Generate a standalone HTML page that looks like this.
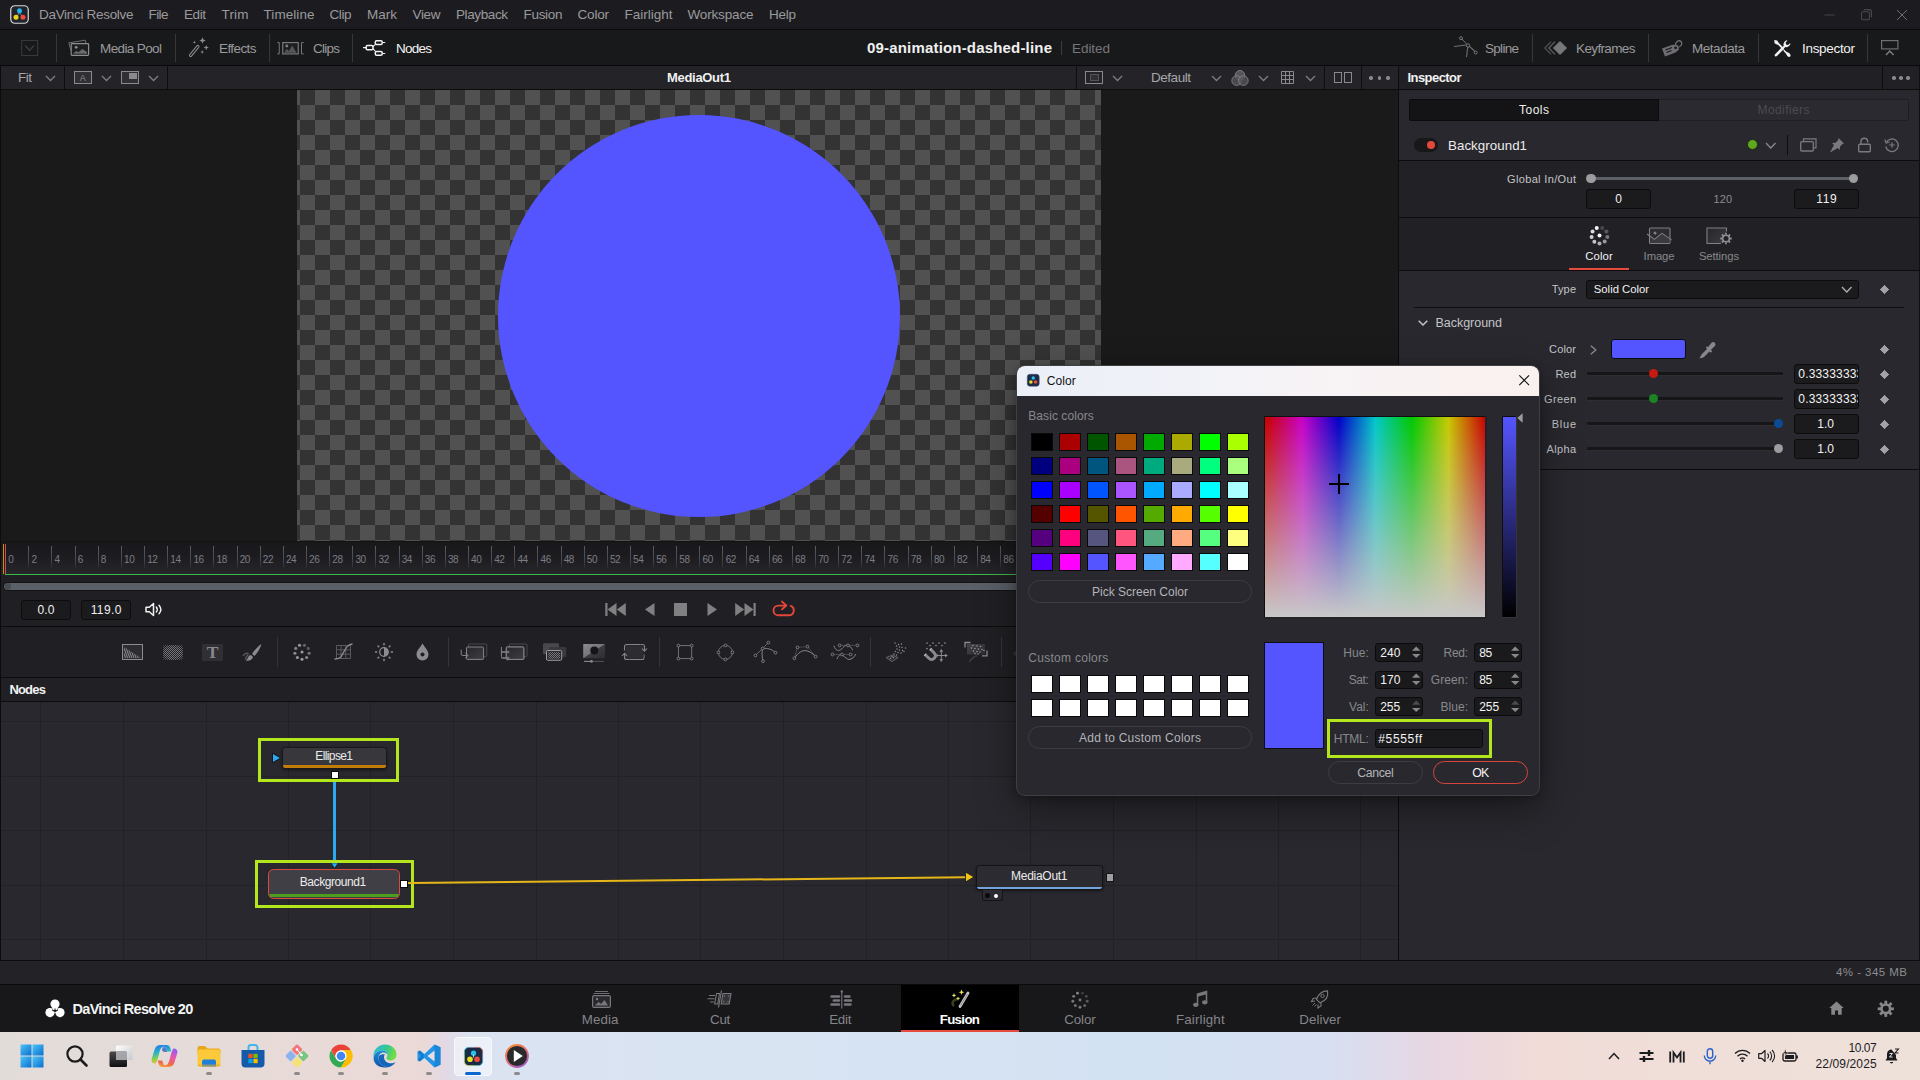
<!DOCTYPE html>
<html lang="en"><head><meta charset="utf-8"><title>DaVinci Resolve - Fusion</title>
<style>
html,body{margin:0;padding:0;background:#000;}
body{width:1920px;height:1080px;overflow:hidden;position:relative;font-family:"Liberation Sans",sans-serif;}
.a{position:absolute;box-sizing:border-box;}
.t{white-space:nowrap;}
svg{overflow:visible;}
</style></head>
<body>
<div class="a" style="left:0px;top:0px;width:1920px;height:30px;background:#1c1c20;"></div>
<div class="a" style="left:0px;top:29px;width:1920px;height:1px;background:#0b0b0c;"></div>
<div class="a" style="left:0px;top:30px;width:1920px;height:36px;background:#18191b;"></div>
<div class="a" style="left:0px;top:65px;width:1920px;height:1px;background:#09090a;"></div>
<div class="a" style="left:0px;top:66px;width:1398px;height:24px;background:#232328;"></div>
<div class="a" style="left:0px;top:89px;width:1398px;height:1px;background:#0c0c0d;"></div>
<div class="a" style="left:0px;top:90px;width:1398px;height:452px;background:#1a1a1a;"></div>
<div class="a" style="left:297px;top:90px;width:804px;height:452px;background-image:conic-gradient(#333333 25%,#515151 0 50%,#333333 0 75%,#515151 0);background-size:30px 30px;background-position:-12px 0;overflow:hidden;"><div class="a" style="left:201px;top:25px;width:402px;height:402px;border-radius:50%;background:#5555ff;"></div></div>
<div class="a" style="left:0px;top:66px;width:1px;height:900px;background:#0c0c0d;"></div>
<svg class="a" style="left:10px;top:5px;" width="19" height="19" viewBox="0 0 19 19"><rect x="0.75" y="0.75" width="17.5" height="17.5" rx="4" fill="#20242c" stroke="#d8d8dc" stroke-width="1.2"/>
<path d="M9.500 7.500L6.300 12M9.500 7.500L12.700 12" stroke="#8a93a8" stroke-width="0.900"/><circle cx="9.500" cy="5.800" r="2.500" fill="#23b5f0"/><circle cx="6" cy="12.300" r="2.500" fill="#e9d51d"/><circle cx="13" cy="12.300" r="2.500" fill="#ef4a3c"/></svg>
<div class="a t" style="top:7.00px;font-size:13.5px;line-height:15px;color:#9a9a9c;letter-spacing:-0.308px;left:39px;"><span>DaVinci Resolve</span></div>
<div class="a t" style="top:7.00px;font-size:13.5px;line-height:15px;color:#9a9a9c;letter-spacing:-0.587px;left:148.5px;"><span>File</span></div>
<div class="a t" style="top:7.00px;font-size:13.5px;line-height:15px;color:#9a9a9c;letter-spacing:-0.422px;left:184px;"><span>Edit</span></div>
<div class="a t" style="top:7.00px;font-size:13.5px;line-height:15px;color:#9a9a9c;letter-spacing:0.171px;left:221.5px;"><span>Trim</span></div>
<div class="a t" style="top:7.00px;font-size:13.5px;line-height:15px;color:#9a9a9c;letter-spacing:0.069px;left:263.5px;"><span>Timeline</span></div>
<div class="a t" style="top:7.00px;font-size:13.5px;line-height:15px;color:#9a9a9c;letter-spacing:-0.422px;left:329.5px;"><span>Clip</span></div>
<div class="a t" style="top:7.00px;font-size:13.5px;line-height:15px;color:#9a9a9c;left:367px;"><span>Mark</span></div>
<div class="a t" style="top:7.00px;font-size:13.5px;line-height:15px;color:#9a9a9c;letter-spacing:-0.344px;left:412.5px;"><span>View</span></div>
<div class="a t" style="top:7.00px;font-size:13.5px;line-height:15px;color:#9a9a9c;letter-spacing:-0.397px;left:456px;"><span>Playback</span></div>
<div class="a t" style="top:7.00px;font-size:13.5px;line-height:15px;color:#9a9a9c;letter-spacing:-0.306px;left:523.5px;"><span>Fusion</span></div>
<div class="a t" style="top:7.00px;font-size:13.5px;line-height:15px;color:#9a9a9c;letter-spacing:-0.191px;left:577.5px;"><span>Color</span></div>
<div class="a t" style="top:7.00px;font-size:13.5px;line-height:15px;color:#9a9a9c;left:624.5px;"><span>Fairlight</span></div>
<div class="a t" style="top:7.00px;font-size:13.5px;line-height:15px;color:#9a9a9c;letter-spacing:-0.160px;left:687.5px;"><span>Workspace</span></div>
<div class="a t" style="top:7.00px;font-size:13.5px;line-height:15px;color:#9a9a9c;letter-spacing:-0.257px;left:769px;"><span>Help</span></div>
<svg class="a" style="left:1824px;top:9px;" width="12" height="12" viewBox="0 0 12 12"><path d="M0.400 6H10.700" stroke="#424246" stroke-width="1.100" fill="none"/></svg>
<svg class="a" style="left:1860px;top:8px;" width="13" height="13" viewBox="0 0 13 13"><rect x="1.500" y="3.700" width="8" height="8" rx="1.700" fill="none" stroke="#48484c" stroke-width="1.100"/><path d="M3.800 1.600h5.200a2.500 2.500 0 0 1 2.500 2.500v5.200" fill="none" stroke="#48484c" stroke-width="1.100"/></svg>
<svg class="a" style="left:1896px;top:9px;" width="12" height="12" viewBox="0 0 12 12"><path d="M1 1L11 11M11 1L1 11" stroke="#707074" stroke-width="1" fill="none"/></svg>
<div class="a" style="left:56px;top:34px;width:1px;height:28px;background:#36363c;"></div>
<div class="a" style="left:175px;top:34px;width:1px;height:28px;background:#36363c;"></div>
<div class="a" style="left:269px;top:34px;width:1px;height:28px;background:#36363c;"></div>
<div class="a" style="left:352px;top:34px;width:1px;height:28px;background:#36363c;"></div>
<div class="a" style="left:1532px;top:34px;width:1px;height:28px;background:#36363c;"></div>
<div class="a" style="left:1648px;top:34px;width:1px;height:28px;background:#36363c;"></div>
<div class="a" style="left:1758px;top:34px;width:1px;height:28px;background:#36363c;"></div>
<div class="a" style="left:1867px;top:34px;width:1px;height:28px;background:#36363c;"></div>
<svg class="a" style="left:21px;top:40px;" width="17" height="16" viewBox="0 0 17 16"><rect x="0.600" y="0.500" width="16" height="15" fill="none" stroke="#38383c" stroke-width="1.100"/><path d="M4.250 5.500l4.250 5 4.500-5" stroke="#3e3e42" stroke-width="1.300" fill="none"/></svg>
<svg class="a" style="left:68px;top:39px;" width="22" height="18" viewBox="0 0 22 18"><path d="M3 11.500L0.800 3.800 17.300 1.200 17.800 4" stroke="#6e6e72" stroke-width="1" fill="none"/><rect x="3.200" y="4.600" width="17.400" height="11.800" rx="0.800" fill="#1d1e20" stroke="#8d8d90" stroke-width="1.200"/>
<circle cx="8.200" cy="8.300" r="1.400" fill="#8d8d90"/><path d="M5 14.800l3.300-2.800 2.200 1.300 3.700-3.300 4.800 3v1.800z" fill="#6a6a6e"/></svg>
<div class="a t" style="top:41.00px;font-size:13.5px;line-height:15px;color:#9a9a9c;letter-spacing:-0.616px;left:100px;"><span>Media Pool</span></div>
<svg class="a" style="left:187px;top:37px;" width="22" height="22" viewBox="0 0 22 22"><path d="M3.600 18.400L10.800 9.600" stroke="#8d8d90" stroke-width="3.300" stroke-linecap="round" fill="none"/><path d="M3.600 18.400L10.800 9.600" stroke="#18191b" stroke-width="1.300" stroke-linecap="round" fill="none"/><path d="M15.5 0.2999999999999998L16.396 2.604L18.7 3.5L16.396 4.396L15.5 6.7L14.604 4.396L12.3 3.5L14.604 2.604z" fill="#8d8d90"/><path d="M19.2 7.8999999999999995L19.956 9.844L21.9 10.6L19.956 11.356L19.2 13.3L18.444 11.356L16.5 10.6L18.444 9.844z" fill="#8d8d90"/><path d="M7.4 3.6L7.848000000000001 4.752L9.0 5.2L7.848000000000001 5.648000000000001L7.4 6.800000000000001L6.952 5.648000000000001L5.800000000000001 5.2L6.952 4.752z" fill="#8d8d90"/><path d="M15.2 13.1L15.732 14.468L17.099999999999998 15L15.732 15.532L15.2 16.9L14.668 15.532L13.299999999999999 15L14.668 14.468z" fill="#8d8d90"/></svg>
<div class="a t" style="top:41.00px;font-size:13.5px;line-height:15px;color:#9a9a9c;letter-spacing:-0.589px;left:219px;"><span>Effects</span></div>
<svg class="a" style="left:277px;top:42px;" width="28" height="13" viewBox="0 0 28 13"><path d="M0.250 0.600h2v11.300h-2" stroke="#77777b" stroke-width="1" fill="none"/><path d="M26.750 0.600h-2.250v11.300h2.250" stroke="#77777b" stroke-width="1" fill="none"/>
<rect x="5.750" y="0.600" width="15.500" height="11.300" fill="#1d1e20" stroke="#808084" stroke-width="1.100"/><circle cx="9.800" cy="4" r="1.400" fill="#808084"/><path d="M7 10.700l2.800-3.700 2.200 2 3.200-5.500 4.300 7.200z" fill="#55555a"/></svg>
<div class="a t" style="top:41.00px;font-size:13.5px;line-height:15px;color:#9a9a9c;letter-spacing:-0.754px;left:313px;"><span>Clips</span></div>
<svg class="a" style="left:363px;top:40px;" width="23" height="16" viewBox="0 0 23 16"><path d="M0 7.600h3M10 6.500l2.500-2.200M10 8.700l2.500 2.800M19.500 2.500h2.700M19.500 13.500h2.700" stroke="#f0f0f0" stroke-width="1.100" fill="none"/>
<rect x="3.200" y="5.400" width="6.800" height="4.400" rx="1.300" fill="none" stroke="#f4f4f4" stroke-width="1.500"/>
<rect x="12.300" y="0.800" width="6.900" height="3.800" rx="1.300" fill="none" stroke="#f4f4f4" stroke-width="1.500"/>
<rect x="12.300" y="11.500" width="6.900" height="3.800" rx="1.300" fill="none" stroke="#f4f4f4" stroke-width="1.500"/></svg>
<div class="a t" style="top:41.00px;font-size:13.5px;line-height:15px;color:#f2f2f2;letter-spacing:-0.756px;left:396px;"><span>Nodes</span></div>
<div class="a t" style="top:39.00px;font-size:15px;line-height:17px;color:#f0f0f0;font-weight:700;letter-spacing:0.179px;left:867px;"><span>09-animation-dashed-line</span></div>
<div class="a" style="left:1061px;top:41px;width:1px;height:14px;background:#3a3a40;"></div>
<div class="a t" style="top:41.00px;font-size:13.5px;line-height:15px;color:#76767a;letter-spacing:-0.058px;left:1072px;"><span>Edited</span></div>
<svg class="a" style="left:1453px;top:36px;" width="25" height="22" viewBox="0 0 25 22"><path d="M1 10.500L13.500 9" stroke="#707074" stroke-width="1.100" fill="none"/>
<path d="M8.500 2.500L15 9.500" stroke="#707074" stroke-width="1" fill="none"/>
<path d="M15 9.500C17 11 20 13 22 16" stroke="#707074" stroke-width="1.100" fill="none"/><path d="M15 9.500C14.500 13 14 17 13.500 21" stroke="#707074" stroke-width="1.100" fill="none"/>
<circle cx="8" cy="2.200" r="1.500" fill="#18191b" stroke="#808084" stroke-width="0.900"/><circle cx="15" cy="9.500" r="1.700" fill="#18191b" stroke="#808084" stroke-width="0.900"/><circle cx="22.700" cy="16.500" r="1.500" fill="#18191b" stroke="#808084" stroke-width="0.900"/></svg>
<div class="a t" style="top:41.00px;font-size:13.5px;line-height:15px;color:#9a9a9c;letter-spacing:-0.706px;left:1485px;"><span>Spline</span></div>
<svg class="a" style="left:1544px;top:41px;" width="24" height="14" viewBox="0 0 24 14"><path d="M7 0.700L0.800 7l6.200 6.300" stroke="#55555a" stroke-width="1.100" fill="none"/><path d="M11 0.700L4.800 7l6.200 6.300" stroke="#66666a" stroke-width="1.100" fill="none"/>
<path d="M16 0.500L22.500 7 16 13.500 9.500 7z" fill="#77777b" stroke="#8a8a8e" stroke-width="0.800"/></svg>
<div class="a t" style="top:41.00px;font-size:13.5px;line-height:15px;color:#9a9a9c;letter-spacing:-0.629px;left:1576px;"><span>Keyframes</span></div>
<svg class="a" style="left:1661px;top:39px;" width="22" height="18" viewBox="0 0 22 18"><path d="M1 9.500l10.500-3.800 5 0.300 1.500 4.500-3.500 3-10.500 4z" fill="#6e6e72"/><circle cx="14.600" cy="8.800" r="1.400" fill="#18191b"/>
<path d="M4.500 11l6.500-2.400M5.500 13.500l5-1.900" stroke="#18191b" stroke-width="1.100"/><path d="M14.500 6c0-3.500 3.500-5.500 5.500-3.500s0 5.500-3.500 6" stroke="#77777b" stroke-width="1.200" fill="none"/></svg>
<div class="a t" style="top:41.00px;font-size:13.5px;line-height:15px;color:#9a9a9c;letter-spacing:-0.471px;left:1692px;"><span>Metadata</span></div>
<svg class="a" style="left:1773px;top:39px;" width="19" height="19" viewBox="0 0 19 19"><path d="M3.500 3L10 9.500" stroke="#f0f0f0" stroke-width="1.800" stroke-linecap="round"/><path d="M1.200 1l3 0.600 1.600 2.600-1.600 1.600-2.600-1.600z" fill="#f0f0f0"/>
<path d="M10.500 10c1.500 1.500 3 3 4.500 3.500s3 2 2.500 3.500-3 1-3.500-0.500-2-3-3.500-4.500z" fill="#f0f0f0"/>
<path d="M3 16.200L9.500 9.500" stroke="#f0f0f0" stroke-width="2.600" stroke-linecap="round"/><path d="M9.500 9.500L12 7" stroke="#f0f0f0" stroke-width="1.800"/>
<path d="M10.800 7.200c-1-2.500 0.200-5 2.800-6l0.800 0.200-1.800 2.300 0.500 1.800 1.800 0.500 2.300-1.800 0.200 0.800c-1 2.600-3.500 3.800-6 2.800z" fill="#f0f0f0"/></svg>
<div class="a t" style="top:41.00px;font-size:13.5px;line-height:15px;color:#f2f2f2;letter-spacing:-0.316px;left:1802px;"><span>Inspector</span></div>
<svg class="a" style="left:1881px;top:40px;" width="18" height="16" viewBox="0 0 18 16"><rect x="0.600" y="0.600" width="16.300" height="8.300" fill="none" stroke="#707074" stroke-width="1.200"/><path d="M5 15l3.800-4 3.800 4" stroke="#808084" stroke-width="1.400" fill="none"/></svg>
<div class="a" style="left:64px;top:66px;width:1px;height:23px;background:#0e0e10;"></div>
<div class="a" style="left:167px;top:66px;width:1px;height:23px;background:#0e0e10;"></div>
<div class="a" style="left:1076px;top:66px;width:1px;height:23px;background:#0e0e10;"></div>
<div class="a" style="left:1324px;top:66px;width:1px;height:23px;background:#0e0e10;"></div>
<div class="a" style="left:1361px;top:66px;width:1px;height:23px;background:#0e0e10;"></div>
<div class="a t" style="top:70.00px;font-size:13.5px;line-height:15px;color:#a6a6a8;letter-spacing:-0.500px;left:18px;"><span>Fit</span></div>
<svg class="a" style="left:45.5px;top:75.75px;" width="9" height="4.5" viewBox="0 0 9 4.5"><path d="M0 0L4.5 4.5L9 0" stroke="#7e7e82" stroke-width="1.3" fill="none"/></svg>
<svg class="a" style="left:74px;top:71px;" width="18" height="13" viewBox="0 0 18 13"><rect x="0.5" y="0.5" width="17" height="12" fill="#2f2f34" stroke="#8a8a8e"/></svg>
<div class="a t" style="top:73.00px;font-size:9px;line-height:10px;color:#8a8a8e;left:-417.30px;width:1000px;text-align:center;"><span>A</span></div>
<svg class="a" style="left:101.5px;top:75.75px;" width="9" height="4.5" viewBox="0 0 9 4.5"><path d="M0 0L4.5 4.5L9 0" stroke="#7e7e82" stroke-width="1.3" fill="none"/></svg>
<svg class="a" style="left:121px;top:71px;" width="18" height="13" viewBox="0 0 18 13"><rect x="0.5" y="0.5" width="17" height="12" fill="#2f2f34" stroke="#8a8a8e"/><rect x="8" y="2" width="8" height="6" fill="#8a8a8e"/></svg>
<svg class="a" style="left:148.5px;top:75.75px;" width="9" height="4.5" viewBox="0 0 9 4.5"><path d="M0 0L4.5 4.5L9 0" stroke="#7e7e82" stroke-width="1.3" fill="none"/></svg>
<div class="a t" style="top:70.00px;font-size:13px;line-height:15px;color:#f0f0f0;font-weight:700;letter-spacing:-0.309px;left:667px;"><span>MediaOut1</span></div>
<svg class="a" style="left:1085px;top:71px;" width="18" height="13" viewBox="0 0 18 13"><rect x="0.5" y="0.5" width="17" height="12" fill="none" stroke="#8a8a8e"/><rect x="5.5" y="3.500" width="8" height="6" fill="#303035" stroke="#8a8a8e" stroke-width="0.900" stroke-dasharray="1 1"/></svg>
<svg class="a" style="left:1112.5px;top:75.75px;" width="9" height="4.5" viewBox="0 0 9 4.5"><path d="M0 0L4.5 4.5L9 0" stroke="#7e7e82" stroke-width="1.3" fill="none"/></svg>
<div class="a t" style="top:70.00px;font-size:13.5px;line-height:15px;color:#a6a6a8;letter-spacing:-0.464px;left:1151px;"><span>Default</span></div>
<svg class="a" style="left:1211.5px;top:75.75px;" width="9" height="4.5" viewBox="0 0 9 4.5"><path d="M0 0L4.5 4.5L9 0" stroke="#7e7e82" stroke-width="1.3" fill="none"/></svg>
<svg class="a" style="left:1231px;top:69px;" width="18" height="18" viewBox="0 0 18 18"><circle cx="9" cy="6.3" r="4.8" fill="#55555a" stroke="#8a8a8e" stroke-width="0.8"/><circle cx="5.6" cy="11.6" r="4.8" fill="#55555a" fill-opacity="0.75" stroke="#8a8a8e" stroke-width="0.8"/><circle cx="12.4" cy="11.6" r="4.8" fill="#55555a" fill-opacity="0.75" stroke="#8a8a8e" stroke-width="0.8"/></svg>
<svg class="a" style="left:1258.5px;top:75.75px;" width="9" height="4.5" viewBox="0 0 9 4.5"><path d="M0 0L4.5 4.5L9 0" stroke="#7e7e82" stroke-width="1.3" fill="none"/></svg>
<svg class="a" style="left:1281px;top:71px;" width="14" height="13" viewBox="0 0 14 13"><path d="M0.5 0.5h12v12h-12zM4.5 0.5v12M8.5 0.5v12M0.5 4.5h12M0.5 8.5h12" stroke="#8a8a8e" stroke-width="1" fill="none"/></svg>
<svg class="a" style="left:1305.5px;top:75.75px;" width="9" height="4.5" viewBox="0 0 9 4.5"><path d="M0 0L4.5 4.5L9 0" stroke="#7e7e82" stroke-width="1.3" fill="none"/></svg>
<svg class="a" style="left:1334px;top:72px;" width="18" height="11" viewBox="0 0 18 11"><rect x="0.5" y="0.5" width="7" height="10" fill="none" stroke="#8a8a8e"/><rect x="10.5" y="0.5" width="7" height="10" fill="none" stroke="#8a8a8e"/></svg>
<div class="a" style="left:1369.3px;top:76.2px;width:3.4px;height:3.4px;background:#8a8a8e;border-radius:50%;"></div>
<div class="a" style="left:1377.8px;top:76.2px;width:3.4px;height:3.4px;background:#8a8a8e;border-radius:50%;"></div>
<div class="a" style="left:1386.3px;top:76.2px;width:3.4px;height:3.4px;background:#8a8a8e;border-radius:50%;"></div>
<div class="a" style="left:1px;top:542px;width:1397px;height:33px;background:linear-gradient(#18181b,#1c1c20 40%,#26262b);"></div>
<div class="a" style="left:0px;top:541px;width:1398px;height:1px;background:#121214;"></div>
<div class="a t" style="top:554.00px;font-size:10px;line-height:11px;color:#7c7c82;letter-spacing:0.130px;left:8.3px;"><span>0</span></div>
<div class="a" style="left:28.0px;top:546px;width:1.3px;height:24px;background:linear-gradient(rgba(110,110,116,0.75),rgba(110,110,116,0.55) 55%,rgba(110,110,116,0));"></div>
<div class="a t" style="top:554.00px;font-size:10px;line-height:11px;color:#7c7c82;letter-spacing:0.130px;left:31.439999999999998px;"><span>2</span></div>
<div class="a" style="left:51.0px;top:546px;width:1.3px;height:24px;background:linear-gradient(rgba(110,110,116,0.75),rgba(110,110,116,0.55) 55%,rgba(110,110,116,0));"></div>
<div class="a t" style="top:554.00px;font-size:10px;line-height:11px;color:#7c7c82;letter-spacing:0.130px;left:54.58px;"><span>4</span></div>
<div class="a" style="left:74.5px;top:546px;width:1.3px;height:24px;background:linear-gradient(rgba(110,110,116,0.75),rgba(110,110,116,0.55) 55%,rgba(110,110,116,0));"></div>
<div class="a t" style="top:554.00px;font-size:10px;line-height:11px;color:#7c7c82;letter-spacing:0.130px;left:77.72000000000001px;"><span>6</span></div>
<div class="a" style="left:97.5px;top:546px;width:1.3px;height:24px;background:linear-gradient(rgba(110,110,116,0.75),rgba(110,110,116,0.55) 55%,rgba(110,110,116,0));"></div>
<div class="a t" style="top:554.00px;font-size:10px;line-height:11px;color:#7c7c82;letter-spacing:0.130px;left:100.86000000000001px;"><span>8</span></div>
<div class="a" style="left:120.5px;top:546px;width:1.3px;height:24px;background:linear-gradient(rgba(110,110,116,0.75),rgba(110,110,116,0.55) 55%,rgba(110,110,116,0));"></div>
<div class="a t" style="top:554.00px;font-size:10px;line-height:11px;color:#7c7c82;letter-spacing:-0.429px;left:124.00000000000001px;"><span>10</span></div>
<div class="a" style="left:143.5px;top:546px;width:1.3px;height:24px;background:linear-gradient(rgba(110,110,116,0.75),rgba(110,110,116,0.55) 55%,rgba(110,110,116,0));"></div>
<div class="a t" style="top:554.00px;font-size:10px;line-height:11px;color:#7c7c82;letter-spacing:-0.429px;left:147.14000000000001px;"><span>12</span></div>
<div class="a" style="left:167.0px;top:546px;width:1.3px;height:24px;background:linear-gradient(rgba(110,110,116,0.75),rgba(110,110,116,0.55) 55%,rgba(110,110,116,0));"></div>
<div class="a t" style="top:554.00px;font-size:10px;line-height:11px;color:#7c7c82;letter-spacing:-0.429px;left:170.28000000000003px;"><span>14</span></div>
<div class="a" style="left:190.0px;top:546px;width:1.3px;height:24px;background:linear-gradient(rgba(110,110,116,0.75),rgba(110,110,116,0.55) 55%,rgba(110,110,116,0));"></div>
<div class="a t" style="top:554.00px;font-size:10px;line-height:11px;color:#7c7c82;letter-spacing:-0.429px;left:193.42000000000002px;"><span>16</span></div>
<div class="a" style="left:213.0px;top:546px;width:1.3px;height:24px;background:linear-gradient(rgba(110,110,116,0.75),rgba(110,110,116,0.55) 55%,rgba(110,110,116,0));"></div>
<div class="a t" style="top:554.00px;font-size:10px;line-height:11px;color:#7c7c82;letter-spacing:-0.429px;left:216.56px;"><span>18</span></div>
<div class="a" style="left:236.5px;top:546px;width:1.3px;height:24px;background:linear-gradient(rgba(110,110,116,0.75),rgba(110,110,116,0.55) 55%,rgba(110,110,116,0));"></div>
<div class="a t" style="top:554.00px;font-size:10px;line-height:11px;color:#7c7c82;letter-spacing:-0.429px;left:239.70000000000002px;"><span>20</span></div>
<div class="a" style="left:259.5px;top:546px;width:1.3px;height:24px;background:linear-gradient(rgba(110,110,116,0.75),rgba(110,110,116,0.55) 55%,rgba(110,110,116,0));"></div>
<div class="a t" style="top:554.00px;font-size:10px;line-height:11px;color:#7c7c82;letter-spacing:-0.429px;left:262.84px;"><span>22</span></div>
<div class="a" style="left:282.5px;top:546px;width:1.3px;height:24px;background:linear-gradient(rgba(110,110,116,0.75),rgba(110,110,116,0.55) 55%,rgba(110,110,116,0));"></div>
<div class="a t" style="top:554.00px;font-size:10px;line-height:11px;color:#7c7c82;letter-spacing:-0.429px;left:285.97999999999996px;"><span>24</span></div>
<div class="a" style="left:305.5px;top:546px;width:1.3px;height:24px;background:linear-gradient(rgba(110,110,116,0.75),rgba(110,110,116,0.55) 55%,rgba(110,110,116,0));"></div>
<div class="a t" style="top:554.00px;font-size:10px;line-height:11px;color:#7c7c82;letter-spacing:-0.429px;left:309.11999999999995px;"><span>26</span></div>
<div class="a" style="left:329.0px;top:546px;width:1.3px;height:24px;background:linear-gradient(rgba(110,110,116,0.75),rgba(110,110,116,0.55) 55%,rgba(110,110,116,0));"></div>
<div class="a t" style="top:554.00px;font-size:10px;line-height:11px;color:#7c7c82;letter-spacing:-0.429px;left:332.26px;"><span>28</span></div>
<div class="a" style="left:352.0px;top:546px;width:1.3px;height:24px;background:linear-gradient(rgba(110,110,116,0.75),rgba(110,110,116,0.55) 55%,rgba(110,110,116,0));"></div>
<div class="a t" style="top:554.00px;font-size:10px;line-height:11px;color:#7c7c82;letter-spacing:-0.429px;left:355.4px;"><span>30</span></div>
<div class="a" style="left:375.0px;top:546px;width:1.3px;height:24px;background:linear-gradient(rgba(110,110,116,0.75),rgba(110,110,116,0.55) 55%,rgba(110,110,116,0));"></div>
<div class="a t" style="top:554.00px;font-size:10px;line-height:11px;color:#7c7c82;letter-spacing:-0.429px;left:378.53999999999996px;"><span>32</span></div>
<div class="a" style="left:398.5px;top:546px;width:1.3px;height:24px;background:linear-gradient(rgba(110,110,116,0.75),rgba(110,110,116,0.55) 55%,rgba(110,110,116,0));"></div>
<div class="a t" style="top:554.00px;font-size:10px;line-height:11px;color:#7c7c82;letter-spacing:-0.429px;left:401.67999999999995px;"><span>34</span></div>
<div class="a" style="left:421.5px;top:546px;width:1.3px;height:24px;background:linear-gradient(rgba(110,110,116,0.75),rgba(110,110,116,0.55) 55%,rgba(110,110,116,0));"></div>
<div class="a t" style="top:554.00px;font-size:10px;line-height:11px;color:#7c7c82;letter-spacing:-0.429px;left:424.81999999999994px;"><span>36</span></div>
<div class="a" style="left:444.5px;top:546px;width:1.3px;height:24px;background:linear-gradient(rgba(110,110,116,0.75),rgba(110,110,116,0.55) 55%,rgba(110,110,116,0));"></div>
<div class="a t" style="top:554.00px;font-size:10px;line-height:11px;color:#7c7c82;letter-spacing:-0.429px;left:447.96px;"><span>38</span></div>
<div class="a" style="left:467.5px;top:546px;width:1.3px;height:24px;background:linear-gradient(rgba(110,110,116,0.75),rgba(110,110,116,0.55) 55%,rgba(110,110,116,0));"></div>
<div class="a t" style="top:554.00px;font-size:10px;line-height:11px;color:#7c7c82;letter-spacing:-0.429px;left:471.09999999999997px;"><span>40</span></div>
<div class="a" style="left:491.0px;top:546px;width:1.3px;height:24px;background:linear-gradient(rgba(110,110,116,0.75),rgba(110,110,116,0.55) 55%,rgba(110,110,116,0));"></div>
<div class="a t" style="top:554.00px;font-size:10px;line-height:11px;color:#7c7c82;letter-spacing:-0.429px;left:494.23999999999995px;"><span>42</span></div>
<div class="a" style="left:514.0px;top:546px;width:1.3px;height:24px;background:linear-gradient(rgba(110,110,116,0.75),rgba(110,110,116,0.55) 55%,rgba(110,110,116,0));"></div>
<div class="a t" style="top:554.00px;font-size:10px;line-height:11px;color:#7c7c82;letter-spacing:-0.429px;left:517.38px;"><span>44</span></div>
<div class="a" style="left:537.0px;top:546px;width:1.3px;height:24px;background:linear-gradient(rgba(110,110,116,0.75),rgba(110,110,116,0.55) 55%,rgba(110,110,116,0));"></div>
<div class="a t" style="top:554.00px;font-size:10px;line-height:11px;color:#7c7c82;letter-spacing:-0.429px;left:540.52px;"><span>46</span></div>
<div class="a" style="left:560.5px;top:546px;width:1.3px;height:24px;background:linear-gradient(rgba(110,110,116,0.75),rgba(110,110,116,0.55) 55%,rgba(110,110,116,0));"></div>
<div class="a t" style="top:554.00px;font-size:10px;line-height:11px;color:#7c7c82;letter-spacing:-0.429px;left:563.66px;"><span>48</span></div>
<div class="a" style="left:583.5px;top:546px;width:1.3px;height:24px;background:linear-gradient(rgba(110,110,116,0.75),rgba(110,110,116,0.55) 55%,rgba(110,110,116,0));"></div>
<div class="a t" style="top:554.00px;font-size:10px;line-height:11px;color:#7c7c82;letter-spacing:-0.429px;left:586.8px;"><span>50</span></div>
<div class="a" style="left:606.5px;top:546px;width:1.3px;height:24px;background:linear-gradient(rgba(110,110,116,0.75),rgba(110,110,116,0.55) 55%,rgba(110,110,116,0));"></div>
<div class="a t" style="top:554.00px;font-size:10px;line-height:11px;color:#7c7c82;letter-spacing:-0.429px;left:609.9399999999999px;"><span>52</span></div>
<div class="a" style="left:629.5px;top:546px;width:1.3px;height:24px;background:linear-gradient(rgba(110,110,116,0.75),rgba(110,110,116,0.55) 55%,rgba(110,110,116,0));"></div>
<div class="a t" style="top:554.00px;font-size:10px;line-height:11px;color:#7c7c82;letter-spacing:-0.429px;left:633.0799999999999px;"><span>54</span></div>
<div class="a" style="left:653.0px;top:546px;width:1.3px;height:24px;background:linear-gradient(rgba(110,110,116,0.75),rgba(110,110,116,0.55) 55%,rgba(110,110,116,0));"></div>
<div class="a t" style="top:554.00px;font-size:10px;line-height:11px;color:#7c7c82;letter-spacing:-0.429px;left:656.22px;"><span>56</span></div>
<div class="a" style="left:676.0px;top:546px;width:1.3px;height:24px;background:linear-gradient(rgba(110,110,116,0.75),rgba(110,110,116,0.55) 55%,rgba(110,110,116,0));"></div>
<div class="a t" style="top:554.00px;font-size:10px;line-height:11px;color:#7c7c82;letter-spacing:-0.429px;left:679.36px;"><span>58</span></div>
<div class="a" style="left:699.0px;top:546px;width:1.3px;height:24px;background:linear-gradient(rgba(110,110,116,0.75),rgba(110,110,116,0.55) 55%,rgba(110,110,116,0));"></div>
<div class="a t" style="top:554.00px;font-size:10px;line-height:11px;color:#7c7c82;letter-spacing:-0.429px;left:702.5px;"><span>60</span></div>
<div class="a" style="left:722.0px;top:546px;width:1.3px;height:24px;background:linear-gradient(rgba(110,110,116,0.75),rgba(110,110,116,0.55) 55%,rgba(110,110,116,0));"></div>
<div class="a t" style="top:554.00px;font-size:10px;line-height:11px;color:#7c7c82;letter-spacing:-0.429px;left:725.64px;"><span>62</span></div>
<div class="a" style="left:745.5px;top:546px;width:1.3px;height:24px;background:linear-gradient(rgba(110,110,116,0.75),rgba(110,110,116,0.55) 55%,rgba(110,110,116,0));"></div>
<div class="a t" style="top:554.00px;font-size:10px;line-height:11px;color:#7c7c82;letter-spacing:-0.429px;left:748.78px;"><span>64</span></div>
<div class="a" style="left:768.5px;top:546px;width:1.3px;height:24px;background:linear-gradient(rgba(110,110,116,0.75),rgba(110,110,116,0.55) 55%,rgba(110,110,116,0));"></div>
<div class="a t" style="top:554.00px;font-size:10px;line-height:11px;color:#7c7c82;letter-spacing:-0.429px;left:771.92px;"><span>66</span></div>
<div class="a" style="left:791.5px;top:546px;width:1.3px;height:24px;background:linear-gradient(rgba(110,110,116,0.75),rgba(110,110,116,0.55) 55%,rgba(110,110,116,0));"></div>
<div class="a t" style="top:554.00px;font-size:10px;line-height:11px;color:#7c7c82;letter-spacing:-0.429px;left:795.06px;"><span>68</span></div>
<div class="a" style="left:815.0px;top:546px;width:1.3px;height:24px;background:linear-gradient(rgba(110,110,116,0.75),rgba(110,110,116,0.55) 55%,rgba(110,110,116,0));"></div>
<div class="a t" style="top:554.00px;font-size:10px;line-height:11px;color:#7c7c82;letter-spacing:-0.429px;left:818.1999999999999px;"><span>70</span></div>
<div class="a" style="left:838.0px;top:546px;width:1.3px;height:24px;background:linear-gradient(rgba(110,110,116,0.75),rgba(110,110,116,0.55) 55%,rgba(110,110,116,0));"></div>
<div class="a t" style="top:554.00px;font-size:10px;line-height:11px;color:#7c7c82;letter-spacing:-0.429px;left:841.3399999999999px;"><span>72</span></div>
<div class="a" style="left:861.0px;top:546px;width:1.3px;height:24px;background:linear-gradient(rgba(110,110,116,0.75),rgba(110,110,116,0.55) 55%,rgba(110,110,116,0));"></div>
<div class="a t" style="top:554.00px;font-size:10px;line-height:11px;color:#7c7c82;letter-spacing:-0.429px;left:864.48px;"><span>74</span></div>
<div class="a" style="left:884.0px;top:546px;width:1.3px;height:24px;background:linear-gradient(rgba(110,110,116,0.75),rgba(110,110,116,0.55) 55%,rgba(110,110,116,0));"></div>
<div class="a t" style="top:554.00px;font-size:10px;line-height:11px;color:#7c7c82;letter-spacing:-0.429px;left:887.62px;"><span>76</span></div>
<div class="a" style="left:907.5px;top:546px;width:1.3px;height:24px;background:linear-gradient(rgba(110,110,116,0.75),rgba(110,110,116,0.55) 55%,rgba(110,110,116,0));"></div>
<div class="a t" style="top:554.00px;font-size:10px;line-height:11px;color:#7c7c82;letter-spacing:-0.429px;left:910.76px;"><span>78</span></div>
<div class="a" style="left:930.5px;top:546px;width:1.3px;height:24px;background:linear-gradient(rgba(110,110,116,0.75),rgba(110,110,116,0.55) 55%,rgba(110,110,116,0));"></div>
<div class="a t" style="top:554.00px;font-size:10px;line-height:11px;color:#7c7c82;letter-spacing:-0.429px;left:933.9px;"><span>80</span></div>
<div class="a" style="left:953.5px;top:546px;width:1.3px;height:24px;background:linear-gradient(rgba(110,110,116,0.75),rgba(110,110,116,0.55) 55%,rgba(110,110,116,0));"></div>
<div class="a t" style="top:554.00px;font-size:10px;line-height:11px;color:#7c7c82;letter-spacing:-0.429px;left:957.04px;"><span>82</span></div>
<div class="a" style="left:977.0px;top:546px;width:1.3px;height:24px;background:linear-gradient(rgba(110,110,116,0.75),rgba(110,110,116,0.55) 55%,rgba(110,110,116,0));"></div>
<div class="a t" style="top:554.00px;font-size:10px;line-height:11px;color:#7c7c82;letter-spacing:-0.429px;left:980.18px;"><span>84</span></div>
<div class="a" style="left:1000.0px;top:546px;width:1.3px;height:24px;background:linear-gradient(rgba(110,110,116,0.75),rgba(110,110,116,0.55) 55%,rgba(110,110,116,0));"></div>
<div class="a t" style="top:554.00px;font-size:10px;line-height:11px;color:#7c7c82;letter-spacing:-0.429px;left:1003.3199999999999px;"><span>86</span></div>
<div class="a" style="left:1023.0px;top:546px;width:1.3px;height:24px;background:linear-gradient(rgba(110,110,116,0.75),rgba(110,110,116,0.55) 55%,rgba(110,110,116,0));"></div>
<div class="a t" style="top:554.00px;font-size:10px;line-height:11px;color:#7c7c82;letter-spacing:-0.429px;left:1026.46px;"><span>88</span></div>
<div class="a" style="left:1046.0px;top:546px;width:1.3px;height:24px;background:linear-gradient(rgba(110,110,116,0.75),rgba(110,110,116,0.55) 55%,rgba(110,110,116,0));"></div>
<div class="a t" style="top:554.00px;font-size:10px;line-height:11px;color:#7c7c82;letter-spacing:-0.429px;left:1049.6000000000001px;"><span>90</span></div>
<div class="a" style="left:1069.5px;top:546px;width:1.3px;height:24px;background:linear-gradient(rgba(110,110,116,0.75),rgba(110,110,116,0.55) 55%,rgba(110,110,116,0));"></div>
<div class="a t" style="top:554.00px;font-size:10px;line-height:11px;color:#7c7c82;letter-spacing:-0.429px;left:1072.7400000000002px;"><span>92</span></div>
<div class="a" style="left:1092.5px;top:546px;width:1.3px;height:24px;background:linear-gradient(rgba(110,110,116,0.75),rgba(110,110,116,0.55) 55%,rgba(110,110,116,0));"></div>
<div class="a t" style="top:554.00px;font-size:10px;line-height:11px;color:#7c7c82;letter-spacing:-0.429px;left:1095.88px;"><span>94</span></div>
<div class="a" style="left:1115.5px;top:546px;width:1.3px;height:24px;background:linear-gradient(rgba(110,110,116,0.75),rgba(110,110,116,0.55) 55%,rgba(110,110,116,0));"></div>
<div class="a t" style="top:554.00px;font-size:10px;line-height:11px;color:#7c7c82;letter-spacing:-0.429px;left:1119.0200000000002px;"><span>96</span></div>
<div class="a" style="left:1139.0px;top:546px;width:1.3px;height:24px;background:linear-gradient(rgba(110,110,116,0.75),rgba(110,110,116,0.55) 55%,rgba(110,110,116,0));"></div>
<div class="a t" style="top:554.00px;font-size:10px;line-height:11px;color:#7c7c82;letter-spacing:-0.429px;left:1142.1600000000003px;"><span>98</span></div>
<div class="a" style="left:1162.0px;top:546px;width:1.3px;height:24px;background:linear-gradient(rgba(110,110,116,0.75),rgba(110,110,116,0.55) 55%,rgba(110,110,116,0));"></div>
<div class="a t" style="top:554.00px;font-size:10px;line-height:11px;color:#7c7c82;letter-spacing:-0.344px;left:1165.3000000000002px;"><span>100</span></div>
<div class="a" style="left:1185.0px;top:546px;width:1.3px;height:24px;background:linear-gradient(rgba(110,110,116,0.75),rgba(110,110,116,0.55) 55%,rgba(110,110,116,0));"></div>
<div class="a t" style="top:554.00px;font-size:10px;line-height:11px;color:#7c7c82;letter-spacing:-0.344px;left:1188.4400000000003px;"><span>102</span></div>
<div class="a" style="left:1208.0px;top:546px;width:1.3px;height:24px;background:linear-gradient(rgba(110,110,116,0.75),rgba(110,110,116,0.55) 55%,rgba(110,110,116,0));"></div>
<div class="a t" style="top:554.00px;font-size:10px;line-height:11px;color:#7c7c82;letter-spacing:-0.344px;left:1211.5800000000002px;"><span>104</span></div>
<div class="a" style="left:1231.5px;top:546px;width:1.3px;height:24px;background:linear-gradient(rgba(110,110,116,0.75),rgba(110,110,116,0.55) 55%,rgba(110,110,116,0));"></div>
<div class="a t" style="top:554.00px;font-size:10px;line-height:11px;color:#7c7c82;letter-spacing:-0.344px;left:1234.7200000000003px;"><span>106</span></div>
<div class="a" style="left:1254.5px;top:546px;width:1.3px;height:24px;background:linear-gradient(rgba(110,110,116,0.75),rgba(110,110,116,0.55) 55%,rgba(110,110,116,0));"></div>
<div class="a t" style="top:554.00px;font-size:10px;line-height:11px;color:#7c7c82;letter-spacing:-0.344px;left:1257.8600000000001px;"><span>108</span></div>
<div class="a" style="left:1277.5px;top:546px;width:1.3px;height:24px;background:linear-gradient(rgba(110,110,116,0.75),rgba(110,110,116,0.55) 55%,rgba(110,110,116,0));"></div>
<div class="a t" style="top:554.00px;font-size:10px;line-height:11px;color:#7c7c82;letter-spacing:0.027px;left:1281.0000000000002px;"><span>110</span></div>
<div class="a" style="left:1300.5px;top:546px;width:1.3px;height:24px;background:linear-gradient(rgba(110,110,116,0.75),rgba(110,110,116,0.55) 55%,rgba(110,110,116,0));"></div>
<div class="a t" style="top:554.00px;font-size:10px;line-height:11px;color:#7c7c82;letter-spacing:0.027px;left:1304.1400000000003px;"><span>112</span></div>
<div class="a" style="left:1324.0px;top:546px;width:1.3px;height:24px;background:linear-gradient(rgba(110,110,116,0.75),rgba(110,110,116,0.55) 55%,rgba(110,110,116,0));"></div>
<div class="a t" style="top:554.00px;font-size:10px;line-height:11px;color:#7c7c82;letter-spacing:0.027px;left:1327.2800000000002px;"><span>114</span></div>
<div class="a" style="left:1347.0px;top:546px;width:1.3px;height:24px;background:linear-gradient(rgba(110,110,116,0.75),rgba(110,110,116,0.55) 55%,rgba(110,110,116,0));"></div>
<div class="a t" style="top:554.00px;font-size:10px;line-height:11px;color:#7c7c82;letter-spacing:0.027px;left:1350.4200000000003px;"><span>116</span></div>
<div class="a" style="left:1370.0px;top:546px;width:1.3px;height:24px;background:linear-gradient(rgba(110,110,116,0.75),rgba(110,110,116,0.55) 55%,rgba(110,110,116,0));"></div>
<div class="a t" style="top:554.00px;font-size:10px;line-height:11px;color:#7c7c82;letter-spacing:0.027px;left:1373.5600000000002px;"><span>118</span></div>
<div class="a" style="left:1393.5px;top:546px;width:1.3px;height:24px;background:linear-gradient(rgba(110,110,116,0.75),rgba(110,110,116,0.55) 55%,rgba(110,110,116,0));"></div>
<div class="a" style="left:3px;top:544px;width:1.4px;height:30px;background:#b8962a;"></div>
<div class="a" style="left:4.6px;top:544px;width:1.6px;height:30px;background:#e2452f;"></div>
<div class="a" style="left:5px;top:574px;width:1393px;height:1.3px;background:#3dbb4a;"></div>
<div class="a" style="left:1px;top:575.3px;width:1397px;height:52px;background:#202024;"></div>
<div class="a" style="left:3px;top:582px;width:1393px;height:9px;background:#131315;border-radius:4.5px;"></div>
<div class="a" style="left:4px;top:583px;width:1391px;height:7px;background:#5a5f68;border-radius:3.5px;"></div>
<div class="a" style="left:4.5px;top:583.3px;width:6.4px;height:6.4px;background:#474b53;border-radius:50%;"></div>
<div class="a" style="left:0px;top:626px;width:1398px;height:1px;background:#0c0c0d;"></div>
<div class="a" style="left:21px;top:600px;width:50px;height:20px;background:#1b1b1d;border:1px solid #0c0c0d;border-radius:3px;"></div>
<div class="a t" style="top:603.00px;font-size:12px;line-height:14px;color:#f0f0f0;letter-spacing:0.156px;left:-453.92px;width:1000px;text-align:center;"><span>0.0</span></div>
<div class="a" style="left:81px;top:600px;width:50px;height:20px;background:#1b1b1d;border:1px solid #0c0c0d;border-radius:3px;"></div>
<div class="a t" style="top:603.00px;font-size:12px;line-height:14px;color:#f0f0f0;letter-spacing:0.365px;left:-393.82px;width:1000px;text-align:center;"><span>119.0</span></div>
<svg class="a" style="left:145px;top:602px;" width="18" height="15" viewBox="0 0 18 15"><path d="M1 5.2h3.3l4.2-3.7v12l-4.2-3.7h-3.3z" fill="none" stroke="#f0f0f0" stroke-width="1.5" stroke-linejoin="round"/>
<path d="M11.3 5c1.2 1.5 1.2 3.500 0 5" stroke="#f0f0f0" stroke-width="1.4" fill="none" stroke-linecap="round"/><path d="M14 3.200c2.200 2.600 2.200 6 0 8.600" stroke="#f0f0f0" stroke-width="1.4" fill="none" stroke-linecap="round"/></svg>
<svg class="a" style="left:605px;top:602px;" width="22" height="15" viewBox="0 0 22 15"><rect x="0.3" y="1" width="2.2" height="13" fill="#808083"/><path d="M11.5 1v13l-9-6.500z M20.800 1v13l-9-6.500z" fill="#808083"/></svg>
<svg class="a" style="left:644px;top:602px;" width="11" height="15" viewBox="0 0 11 15"><path d="M10.500 1v13l-9.500-6.500z" fill="#808083"/></svg>
<svg class="a" style="left:674px;top:603px;" width="13" height="13" viewBox="0 0 13 13"><rect x="0" y="0" width="13" height="13" fill="#808083"/></svg>
<svg class="a" style="left:707px;top:602px;" width="11" height="15" viewBox="0 0 11 15"><path d="M0.500 1v13l9.500-6.500z" fill="#808083"/></svg>
<svg class="a" style="left:734px;top:602px;" width="22" height="15" viewBox="0 0 22 15"><rect x="19.500" y="1" width="2.2" height="13" fill="#808083"/><path d="M1.200 1v13l9-6.500z M10.500 1v13l9-6.500z" fill="#808083"/></svg>
<svg class="a" style="left:772px;top:600px;" width="23" height="17" viewBox="0 0 23 17"><path d="M13.500 5.600H6.350a4.850 4.850 0 0 0 0 9.700H16.900a4.850 4.850 0 0 0 1.800-9.350" fill="none" stroke="#e8453a" stroke-width="1.900" stroke-linecap="round"/>
<path d="M10 1.600l4.300 3.900-4.300 3.900" fill="none" stroke="#e8453a" stroke-width="1.900" stroke-linecap="round" stroke-linejoin="round"/></svg>
<div class="a" style="left:1px;top:627px;width:1397px;height:50px;background:#202024;"></div>
<div class="a" style="left:0px;top:677px;width:1398px;height:1px;background:#0c0c0d;"></div>
<div class="a" style="left:277.0px;top:637px;width:1px;height:30px;background:#34343a;"></div>
<div class="a" style="left:448.0px;top:637px;width:1px;height:30px;background:#34343a;"></div>
<div class="a" style="left:659.0px;top:637px;width:1px;height:30px;background:#34343a;"></div>
<div class="a" style="left:870.0px;top:637px;width:1px;height:30px;background:#34343a;"></div>
<div class="a" style="left:1001.0px;top:637px;width:1px;height:30px;background:#34343a;"></div>
<svg class="a" style="left:122px;top:644px;" width="21" height="16" viewBox="0 0 21 16"><defs><pattern id="hat" width="2" height="2" patternUnits="userSpaceOnUse" patternTransform="rotate(-20)"><rect width="1" height="2" fill="#8c8c90"/></pattern></defs>
<rect x="0.5" y="0.5" width="20" height="15" fill="#2c2c31" stroke="#8c8c90"/><path d="M2 3L19 14H2z" fill="url(#hat)"/></svg>
<svg class="a" style="left:163px;top:645px;" width="20" height="15" viewBox="0 0 20 15"><defs><pattern id="dots" width="2" height="2" patternUnits="userSpaceOnUse"><rect width="1" height="1" fill="#77777b"/><rect x="1" y="1" width="1" height="1" fill="#77777b"/></pattern>
<radialGradient id="fade" cx="50%" cy="50%" r="75%"><stop offset="0.55" stop-color="#fff"/><stop offset="1" stop-color="#000"/></radialGradient><mask id="mk"><rect width="20" height="15" fill="url(#fade)"/></mask></defs>
<rect width="20" height="15" fill="url(#dots)" mask="url(#mk)"/></svg>
<div class="a" style="left:202px;top:644px;width:21px;height:17px;background:#2f2f34;border-radius:1px;"></div>
<div class="a t" style="top:642.00px;font-size:17.5px;line-height:20px;color:#88888c;font-weight:700;font-family:'Liberation Serif',serif;left:-287.50px;width:1000px;text-align:center;"><span>T</span></div>
<svg class="a" style="left:242px;top:643px;" width="21" height="19" viewBox="0 0 21 19"><path d="M19.500 1c-3 2-7 6-9.500 10l2.500 2c3-3.500 6-8 7-12z" fill="#8c8c90"/><path d="M9 12c-2.500 0.500-3 2-3.500 3.500-0.300 1-1 1.800-2 2 2.500 0.800 6.500 0 7.500-3.500z" fill="#8c8c90"/>
<path d="M1 13c2-3 6-4 5-1.500s-4 4-1.500 4.500" stroke="#5a5a5e" stroke-width="1.300" fill="none"/></svg>
<svg class="a" style="left:292px;top:642px;" width="20" height="20" viewBox="0 0 20 20"><circle cx="7.53" cy="3.24" r="1.55" fill="#99999d"/><circle cx="12.46" cy="3.23" r="1.55" fill="#66666a"/><circle cx="16.23" cy="6.39" r="1.55" fill="#5a5a5e"/><circle cx="17.09" cy="11.24" r="1.55" fill="#77777b"/><circle cx="14.63" cy="15.51" r="1.55" fill="#88888c"/><circle cx="10.01" cy="17.20" r="1.55" fill="#99999d"/><circle cx="5.38" cy="15.52" r="1.55" fill="#99999d"/><circle cx="2.91" cy="11.26" r="1.55" fill="#8c8c90"/><circle cx="3.76" cy="6.41" r="1.55" fill="#808084"/><circle cx="10" cy="10" r="1.55" fill="#99999d"/></svg>
<svg class="a" style="left:334px;top:643px;" width="19" height="18" viewBox="0 0 19 18"><path d="M2.500 2.500h14v13h-14zM7 2.500v13M11.800 2.500v13M2.500 6.800h14M2.500 11.200h14" stroke="#5a5a5e" stroke-width="1" fill="none"/>
<path d="M0.500 16c6 0 6.500-2 9-6.500s4-8 9-8.500" stroke="#8c8c90" stroke-width="1.300" fill="none"/></svg>
<svg class="a" style="left:373px;top:642px;" width="22" height="20" viewBox="0 0 22 20"><circle cx="11" cy="10" r="4.300" fill="none" stroke="#8c8c90" stroke-width="1.200"/><path d="M11 5.700a4.300 4.300 0 0 1 0 8.600z" fill="#8c8c90"/>
<g stroke="#8c8c90" stroke-width="1.500" stroke-linecap="round"><path d="M11 1.500v1.200M11 17.300v1.200M2.500 10h1.200M18.300 10h1.200M5 4l0.800 0.800M16.200 15.200l0.800 0.800M5 16l0.800-0.800M16.200 4.800l0.800-0.800"/></g></svg>
<svg class="a" style="left:416px;top:643px;" width="13" height="18" viewBox="0 0 13 18"><path d="M6.500 0.500c2 3.500 6 7 6 11a6 6 0 0 1 -12 0c0-4 4-7.500 6-11z" fill="#8c8c90"/><circle cx="6.500" cy="11.500" r="2" fill="#202024"/></svg>
<svg class="a" style="left:460px;top:643px;" width="28" height="18" viewBox="0 0 28 18"><defs><linearGradient id="fg" x1="0" y1="0" x2="1" y2="1"><stop offset="0" stop-color="#26262b"/><stop offset="1" stop-color="#3e3e44"/></linearGradient></defs><rect x="8.600" y="1" width="18.200" height="12.400" rx="0.800" fill="none" stroke="#4e4e53" stroke-width="0.900"/><rect x="6.500" y="4" width="17.100" height="12.400" rx="0.800" fill="url(#fg)" stroke="#858589" stroke-width="1"/><path d="M1.200 6.700v4.300a1.500 1.500 0 0 0 1.500 1.500h5" stroke="#858589" stroke-width="1" fill="none"/><path d="M5.300 9.800l2.700 2.700-2.700 2.700" stroke="#858589" stroke-width="1" fill="none"/></svg>
<svg class="a" style="left:500px;top:643px;" width="28" height="18" viewBox="0 0 28 18"><rect x="9.300" y="1" width="17.700" height="12.400" rx="0.800" fill="none" stroke="#4e4e53" stroke-width="0.900"/><rect x="6.300" y="4" width="17.500" height="12.400" rx="0.800" fill="url(#fg)" stroke="#858589" stroke-width="1"/><path d="M1.400 4v9.500a1.500 1.500 0 0 0 1.500 1.500h6.500M1.400 9h8" stroke="#858589" stroke-width="1" fill="none"/><path d="M7.500 6.800l2.300 2.200-2.300 2.200M7.500 12.800l2.300 2.200-2.300 2.200" stroke="#858589" stroke-width="1" fill="none"/><rect x="6.300" y="4" width="17.500" height="12.400" rx="0.800" fill="url(#fg)" stroke="#858589" stroke-width="1"/><path d="M1.400 9h5.500M1.400 15h5.500" stroke="#858589" stroke-width="1"/><path d="M7.300 7.400l2.600 1.600-2.600 1.600zM7.300 13.400l2.600 1.600-2.600 1.600z" fill="#858589"/></svg>
<svg class="a" style="left:542px;top:642px;" width="25" height="20" viewBox="0 0 25 20"><rect x="1" y="1.200" width="16" height="11" rx="1.200" fill="#48484d"/><rect x="7.200" y="5" width="17" height="10" rx="1.200" fill="#38383d"/><rect x="4.500" y="8.500" width="15.200" height="9.800" rx="1.200" fill="#2a2a2f" stroke="#9c9ca0" stroke-width="1"/><rect x="6.300" y="10.200" width="11.800" height="6.500" fill="url(#dots)"/></svg>
<svg class="a" style="left:583px;top:643px;" width="23" height="20" viewBox="0 0 23 20"><defs><linearGradient id="gr1" x1="0" y1="0" x2="1" y2="1"><stop offset="0" stop-color="#8c8c90"/><stop offset="0.480" stop-color="#77777b"/><stop offset="0.520" stop-color="#3c3c41"/><stop offset="1" stop-color="#2c2c31"/></linearGradient></defs>
<rect x="0.200" y="1" width="21.800" height="14.200" rx="0.800" fill="url(#gr1)"/><circle cx="11.300" cy="7.600" r="4" fill="#151518"/><path d="M1 18.400h20" stroke="#5a5a5e" stroke-width="0.900"/><path d="M1 18.400h7" stroke="#8c8c90" stroke-width="1"/><circle cx="8.500" cy="18.400" r="1.300" fill="#8c8c90"/></svg>
<svg class="a" style="left:621px;top:642px;" width="27" height="21" viewBox="0 0 27 21"><path d="M19.500 2.500h-14a2 2 0 0 0 -2 2v4" stroke="#858589" stroke-width="1.100" fill="none"/><path d="M8.500 17.500h12.500a2 2 0 0 0 2-2v-3" stroke="#858589" stroke-width="1.100" fill="none"/>
<rect x="4.200" y="3.200" width="18.300" height="13.600" rx="1.500" fill="#2c2c31"/>
<path d="M19.500 2.500h2a2 2 0 0 1 2 2v4.500M21 6.500l2.500 2.700 2.500-2.700" stroke="#858589" stroke-width="1.100" fill="none"/><path d="M8.500 17.500h-3a2 2 0 0 1 -2-2v-4M1 14l2.500-2.700 2.500 2.700" stroke="#858589" stroke-width="1.100" fill="none"/></svg>
<svg class="a" style="left:676px;top:643px;" width="18" height="18" viewBox="0 0 18 18"><rect x="2.400" y="2.600" width="13.300" height="13" fill="none" stroke="#78787c" stroke-width="0.900"/><circle cx="2.4" cy="2.6" r="1.4" fill="#202024" stroke="#8c8c90" stroke-width="0.800"/><circle cx="15.7" cy="2.6" r="1.4" fill="#202024" stroke="#8c8c90" stroke-width="0.800"/><circle cx="2.4" cy="15.6" r="1.4" fill="#202024" stroke="#8c8c90" stroke-width="0.800"/><circle cx="15.7" cy="15.6" r="1.4" fill="#202024" stroke="#8c8c90" stroke-width="0.800"/></svg>
<svg class="a" style="left:716px;top:643px;" width="19" height="19" viewBox="0 0 19 19"><circle cx="9.400" cy="9.400" r="7" fill="none" stroke="#78787c" stroke-width="0.900"/><circle cx="9.4" cy="2.4" r="1.4" fill="#202024" stroke="#8c8c90" stroke-width="0.800"/><circle cx="16.4" cy="9.4" r="1.4" fill="#202024" stroke="#8c8c90" stroke-width="0.800"/><circle cx="9.4" cy="16.4" r="1.4" fill="#202024" stroke="#8c8c90" stroke-width="0.800"/><circle cx="2.4" cy="9.4" r="1.4" fill="#202024" stroke="#8c8c90" stroke-width="0.800"/></svg>
<svg class="a" style="left:753px;top:640px;" width="25" height="24" viewBox="0 0 25 24"><path d="M15.400 2.600L9.600 8.500 2.500 15.400" stroke="#78787c" stroke-width="0.800" fill="none"/><path d="M9.600 8.500c5-0.500 9 0.500 12.900 4.200M9.600 8.500c-1 4.500-0.500 8.500 0.400 12.700" stroke="#8a8a8e" stroke-width="0.900" fill="none"/><circle cx="15.4" cy="2.6" r="1.4" fill="#202024" stroke="#8c8c90" stroke-width="0.800"/><circle cx="9.6" cy="8.5" r="1.4" fill="#202024" stroke="#8c8c90" stroke-width="0.800"/><circle cx="2.5" cy="15.4" r="1.4" fill="#202024" stroke="#8c8c90" stroke-width="0.800"/><circle cx="22.5" cy="12.7" r="1.4" fill="#202024" stroke="#8c8c90" stroke-width="0.800"/><circle cx="10" cy="21.2" r="1.4" fill="#202024" stroke="#8c8c90" stroke-width="0.800"/></svg>
<svg class="a" style="left:792px;top:644px;" width="26" height="17" viewBox="0 0 26 17"><path d="M2.400 14.300L5.500 3.400 15.500 2.600 23.600 12.600" stroke="#58585c" stroke-width="0.700" fill="none"/><path d="M2.400 14.300c4-6 8-8 11-7.700s7 2.500 10.200 6" stroke="#8a8a8e" stroke-width="1" fill="none"/><circle cx="2.4" cy="14.3" r="1.4" fill="#202024" stroke="#8c8c90" stroke-width="0.800"/><circle cx="5.5" cy="3.4" r="1.4" fill="#202024" stroke="#8c8c90" stroke-width="0.800"/><circle cx="15.5" cy="2.6" r="1.4" fill="#202024" stroke="#8c8c90" stroke-width="0.800"/><circle cx="23.6" cy="12.6" r="1.4" fill="#202024" stroke="#8c8c90" stroke-width="0.800"/></svg>
<svg class="a" style="left:830px;top:642px;" width="30" height="20" viewBox="0 0 30 20"><path d="M9.600 3.400h18M2.500 12.500h18" stroke="#58585c" stroke-width="0.700"/><path d="M3.800 3.800c2 5 5 6 8 3s5-5 7.500-3 3 3.500 3.200 4.500" stroke="#8a8a8e" stroke-width="1" fill="none"/><path d="M7 17c1.500-4 3.500-5.500 6-3.500s5 5 8 3.500 4-3 4.500-5" stroke="#8a8a8e" stroke-width="1" fill="none"/><circle cx="9.6" cy="3.4" r="1.4" fill="#202024" stroke="#8c8c90" stroke-width="0.800"/><circle cx="18" cy="3.4" r="1.4" fill="#202024" stroke="#8c8c90" stroke-width="0.800"/><circle cx="27.5" cy="3.4" r="1.4" fill="#202024" stroke="#8c8c90" stroke-width="0.800"/><circle cx="2.5" cy="12.5" r="1.4" fill="#202024" stroke="#8c8c90" stroke-width="0.800"/><circle cx="11.9" cy="12.5" r="1.4" fill="#202024" stroke="#8c8c90" stroke-width="0.800"/><circle cx="20.6" cy="12.5" r="1.4" fill="#202024" stroke="#8c8c90" stroke-width="0.800"/></svg>
<svg class="a" style="left:885px;top:641px;" width="23" height="22" viewBox="0 0 23 22"><path d="M1 16.600l6.500-2.600 5.500 2.600-6.100 4z" fill="#303035" stroke="#6a6a6e" stroke-width="0.900"/><circle cx="10" cy="2" r="0.75" fill="#8c8c90"/><circle cx="11.5" cy="5" r="0.75" fill="#8c8c90"/><circle cx="13.5" cy="3.5" r="0.75" fill="#8c8c90"/><circle cx="16.5" cy="3" r="0.75" fill="#8c8c90"/><circle cx="14.5" cy="6" r="0.75" fill="#8c8c90"/><circle cx="17" cy="6.5" r="0.75" fill="#8c8c90"/><circle cx="20.5" cy="7" r="0.75" fill="#8c8c90"/><circle cx="12" cy="8" r="0.75" fill="#8c8c90"/><circle cx="14.5" cy="9" r="0.75" fill="#8c8c90"/><circle cx="17.5" cy="9.5" r="0.75" fill="#8c8c90"/><circle cx="10.5" cy="10.5" r="0.75" fill="#8c8c90"/><circle cx="13" cy="11.5" r="0.75" fill="#8c8c90"/><circle cx="16" cy="12" r="0.75" fill="#8c8c90"/><circle cx="9" cy="13" r="0.75" fill="#8c8c90"/><circle cx="11.5" cy="14" r="0.75" fill="#8c8c90"/><circle cx="7" cy="15.5" r="0.75" fill="#8c8c90"/><circle cx="5.5" cy="17.5" r="0.75" fill="#8c8c90"/><circle cx="8.5" cy="16.5" r="0.75" fill="#8c8c90"/><circle cx="19" cy="10.5" r="0.75" fill="#8c8c90"/></svg>
<svg class="a" style="left:924px;top:641px;" width="26" height="23" viewBox="0 0 26 23"><circle cx="3" cy="2" r="0.85" fill="#8c8c90"/><circle cx="9" cy="2" r="0.85" fill="#8c8c90"/><circle cx="15" cy="2" r="0.85" fill="#8c8c90"/><circle cx="21" cy="2" r="0.85" fill="#8c8c90"/><circle cx="6" cy="4.5" r="0.85" fill="#8c8c90"/><circle cx="12" cy="4.5" r="0.85" fill="#8c8c90"/><circle cx="18" cy="4.5" r="0.85" fill="#8c8c90"/><circle cx="3" cy="7.5" r="0.85" fill="#8c8c90"/><g transform="translate(7.200,14.300) rotate(-45)"><path d="M-3.800 -3.500V0.500A3.800 3.800 0 0 0 3.800 0.500V-3.500" stroke="#8c8c90" stroke-width="2.900" fill="none"/><path d="M-5.250 -4.500h2.900M2.350 -4.500h2.900" stroke="#c0c0c4" stroke-width="1.600"/></g><path d="M11.300 14.500h12M17.300 8.500v12" stroke="#8c8c90" stroke-width="1"/><path d="M11 14.500l2.500-2v4zM23.600 14.500l-2.500-2v4zM17.300 8.200l-2 2.500h4zM17.300 20.800l-2-2.500h4z" fill="#8c8c90"/></svg>
<svg class="a" style="left:964px;top:641px;" width="24" height="22" viewBox="0 0 24 22"><defs><linearGradient id="prg" x1="0" y1="0" x2="1" y2="1"><stop offset="0" stop-color="#45454a"/><stop offset="1" stop-color="#2a2a2f"/></linearGradient></defs>
<rect x="3" y="3" width="18" height="10.500" fill="url(#prg)"/><path d="M1 6.500v-5h5.500M23 9.500v5.300h-5" stroke="#8c8c90" stroke-width="1.300" fill="none"/><circle cx="9" cy="4.5" r="0.75" fill="#a0a0a4"/><circle cx="13" cy="5" r="0.75" fill="#a0a0a4"/><circle cx="16.5" cy="5.5" r="0.75" fill="#a0a0a4"/><circle cx="7.5" cy="7" r="0.75" fill="#a0a0a4"/><circle cx="11" cy="7.5" r="0.75" fill="#a0a0a4"/><circle cx="14.5" cy="8" r="0.75" fill="#a0a0a4"/><circle cx="18" cy="8.5" r="0.75" fill="#a0a0a4"/><circle cx="9.5" cy="10" r="0.75" fill="#a0a0a4"/><circle cx="13" cy="10.5" r="0.75" fill="#a0a0a4"/><circle cx="16" cy="11" r="0.75" fill="#a0a0a4"/><circle cx="20" cy="9.5" r="0.75" fill="#a0a0a4"/><circle cx="11" cy="12.5" r="0.75" fill="#a0a0a4"/><circle cx="14" cy="13" r="0.75" fill="#a0a0a4"/><circle cx="12" cy="15" r="0.75" fill="#5a5a5e"/><circle cx="10" cy="16" r="0.75" fill="#5a5a5e"/><circle cx="8.5" cy="17.2" r="0.75" fill="#5a5a5e"/><circle cx="7.2" cy="18.5" r="0.75" fill="#5a5a5e"/><circle cx="6" cy="20" r="0.75" fill="#5a5a5e"/></svg>
<svg class="a" style="left:1012px;top:650px;" width="5" height="7" viewBox="0 0 5 7"><path d="M5 0v7l-4.500-3.500z" fill="#38383d"/></svg>
<div class="a" style="left:1px;top:678px;width:1397px;height:23px;background:#212125;"></div>
<div class="a" style="left:0px;top:701px;width:1398px;height:1px;background:#0c0c0d;"></div>
<div class="a t" style="top:682.00px;font-size:13px;line-height:15px;color:#f2f2f2;font-weight:700;letter-spacing:-0.809px;left:9.4px;"><span>Nodes</span></div>
<div class="a" style="left:1px;top:702px;width:1397px;height:258px;background:#28282e;"></div>
<div class="a" style="left:40px;top:702px;width:1px;height:258px;background:#212126;"></div>
<div class="a" style="left:123px;top:702px;width:1px;height:258px;background:#212126;"></div>
<div class="a" style="left:206px;top:702px;width:1px;height:258px;background:#212126;"></div>
<div class="a" style="left:288px;top:702px;width:1px;height:258px;background:#212126;"></div>
<div class="a" style="left:370px;top:702px;width:1px;height:258px;background:#212126;"></div>
<div class="a" style="left:453px;top:702px;width:1px;height:258px;background:#212126;"></div>
<div class="a" style="left:536px;top:702px;width:1px;height:258px;background:#212126;"></div>
<div class="a" style="left:618px;top:702px;width:1px;height:258px;background:#212126;"></div>
<div class="a" style="left:700px;top:702px;width:1px;height:258px;background:#212126;"></div>
<div class="a" style="left:783px;top:702px;width:1px;height:258px;background:#212126;"></div>
<div class="a" style="left:866px;top:702px;width:1px;height:258px;background:#212126;"></div>
<div class="a" style="left:948px;top:702px;width:1px;height:258px;background:#212126;"></div>
<div class="a" style="left:1030px;top:702px;width:1px;height:258px;background:#212126;"></div>
<div class="a" style="left:1113px;top:702px;width:1px;height:258px;background:#212126;"></div>
<div class="a" style="left:1196px;top:702px;width:1px;height:258px;background:#212126;"></div>
<div class="a" style="left:1278px;top:702px;width:1px;height:258px;background:#212126;"></div>
<div class="a" style="left:1360px;top:702px;width:1px;height:258px;background:#212126;"></div>
<div class="a" style="left:1px;top:721px;width:1397px;height:1px;background:#212126;"></div>
<div class="a" style="left:1px;top:776px;width:1397px;height:1px;background:#212126;"></div>
<div class="a" style="left:1px;top:830px;width:1397px;height:1px;background:#212126;"></div>
<div class="a" style="left:1px;top:885px;width:1397px;height:1px;background:#212126;"></div>
<div class="a" style="left:1px;top:939px;width:1397px;height:1px;background:#212126;"></div>
<div class="a" style="left:0px;top:960px;width:1920px;height:1px;background:#0c0c0d;"></div>
<div class="a" style="left:258px;top:738px;width:141px;height:44px;border:3px solid #b4e61d;"></div>
<div class="a" style="left:282px;top:747px;width:105px;height:22px;background:#37373c;border:1px solid #19191b;border-radius:3.5px;overflow:hidden;box-shadow:0 1px 3px rgba(0,0,0,0.5);"><div class="a" style="left:0;right:0;bottom:0;height:3px;background:#c27c08;"></div></div>
<div class="a t" style="top:749.00px;font-size:12px;line-height:14px;color:#ececec;letter-spacing:-0.619px;left:-166.11px;width:1000px;text-align:center;"><span>Ellipse1</span></div>
<svg class="a" style="left:271px;top:752px;" width="11" height="12" viewBox="0 0 11 12"><path d="M1.500 1.200L9.800 6 1.500 10.800z" fill="#2aa9f0" stroke="#121214" stroke-width="1"/></svg>
<div class="a" style="left:330.5px;top:770.5px;width:8.2px;height:8.2px;background:#ffffff;border:1px solid #0a0a0a;"></div>
<div class="a" style="left:333.4px;top:782px;width:2.6px;height:82px;background:#2aa9f0;"></div>
<svg class="a" style="left:330px;top:862px;" width="10" height="8" viewBox="0 0 10 8"><path d="M0.800 0.800h7.600L4.600 6.500z" fill="#2aa9f0" stroke="#121214" stroke-width="0.800"/></svg>
<div class="a" style="left:255px;top:860px;width:159px;height:48px;border:3px solid #b4e61d;"></div>
<div class="a" style="left:267.5px;top:868.5px;width:132px;height:30px;background:#3f3f45;border:1.600px solid #d94a3a;border-radius:5.500px;overflow:hidden;"><div class="a" style="left:0;right:0;bottom:0.500px;height:3px;background:#4c9e1e;"></div></div>
<div class="a t" style="top:875.00px;font-size:12px;line-height:14px;color:#ececec;letter-spacing:-0.422px;left:-167.21px;width:1000px;text-align:center;"><span>Background1</span></div>
<div class="a" style="left:399.5px;top:879.5px;width:8.2px;height:8.2px;background:#ffffff;border:1px solid #0a0a0a;"></div>
<svg class="a" style="left:400px;top:870px;" width="580" height="20" viewBox="0 0 580 20"><path d="M8 13L566 7.300" stroke="#e6b619" stroke-width="2" fill="none"/><path d="M565.500 2L574 7 565.500 12z" fill="#f0c419" stroke="#121214" stroke-width="0.800"/></svg>
<div class="a" style="left:976px;top:865px;width:127px;height:25px;background:#2b2b31;border:1px solid #141416;border-radius:3.500px;overflow:hidden;box-shadow:0 1px 3px rgba(0,0,0,0.5);"><div class="a" style="left:0;right:0;bottom:0;height:2.500px;background:#74a4dc;"></div></div>
<div class="a t" style="top:869.00px;font-size:12px;line-height:14px;color:#ececec;letter-spacing:-0.275px;left:539.16px;width:1000px;text-align:center;"><span>MediaOut1</span></div>
<div class="a" style="left:1105.5px;top:873px;width:8.6px;height:8.6px;background:#a0a0a2;border:1px solid #151517;"></div>
<div class="a" style="left:982px;top:890px;width:20.5px;height:11px;background:#2b2b31;border:1px solid #141416;border-top:none;border-radius:0 0 3px 3px;"></div>
<div class="a" style="left:985.3px;top:893.3px;width:5.2px;height:5.2px;background:#0a0a0b;border-radius:50%;"></div>
<div class="a" style="left:993.5px;top:893.5px;width:4.8px;height:4.8px;background:#ffffff;border-radius:50%;"></div>
<div class="a" style="left:0px;top:961px;width:1920px;height:23px;background:#232327;"></div>
<div class="a" style="left:0px;top:984px;width:1920px;height:1px;background:#0a0a0b;"></div>
<div class="a t" style="top:966.00px;font-size:11.5px;line-height:12px;color:#8c8c90;letter-spacing:0.452px;right:12.55px;"><span>4% -  345 MB</span></div>
<div class="a" style="left:1398px;top:66px;width:1px;height:895px;background:#0c0c0d;"></div>
<div class="a" style="left:1399px;top:66px;width:521px;height:24px;background:#212125;"></div>
<div class="a" style="left:1399px;top:89px;width:521px;height:1px;background:#0c0c0d;"></div>
<div class="a" style="left:1399px;top:90px;width:521px;height:71px;background:#28282e;"></div>
<div class="a" style="left:1399px;top:160px;width:521px;height:1px;background:#0c0c0d;"></div>
<div class="a" style="left:1399px;top:161px;width:521px;height:56px;background:#222226;"></div>
<div class="a" style="left:1399px;top:217px;width:521px;height:1px;background:#0c0c0d;"></div>
<div class="a" style="left:1399px;top:218px;width:521px;height:52px;background:#212125;"></div>
<div class="a" style="left:1399px;top:270px;width:521px;height:1px;background:#0c0c0d;"></div>
<div class="a" style="left:1399px;top:271px;width:521px;height:198px;background:#28282e;"></div>
<div class="a" style="left:1399px;top:469px;width:521px;height:1px;background:#0c0c0d;"></div>
<div class="a" style="left:1399px;top:470px;width:521px;height:490px;background:#28282e;"></div>
<div class="a" style="left:1919px;top:66px;width:1px;height:895px;background:#101012;"></div>
<div class="a t" style="top:70.00px;font-size:13px;line-height:15px;color:#f2f2f2;font-weight:700;letter-spacing:-0.564px;left:1407.5px;"><span>Inspector</span></div>
<div class="a" style="left:1882px;top:66px;width:1px;height:23px;background:#0c0c0d;"></div>
<div class="a" style="left:1892.2px;top:76px;width:3.6px;height:3.6px;background:#8a8a8e;border-radius:50%;"></div>
<div class="a" style="left:1899.2px;top:76px;width:3.6px;height:3.6px;background:#8a8a8e;border-radius:50%;"></div>
<div class="a" style="left:1906.2px;top:76px;width:3.6px;height:3.6px;background:#8a8a8e;border-radius:50%;"></div>
<div class="a" style="left:1409px;top:99px;width:500px;height:22px;background:#2a2a30;border:1px solid #1f1f23;border-radius:2px;"></div>
<div class="a" style="left:1409px;top:99px;width:250px;height:22px;background:#141416;border:1px solid #0c0c0d;border-radius:2px 0 0 2px;"></div>
<div class="a t" style="top:103.00px;font-size:12px;line-height:14px;color:#f0f0f0;letter-spacing:0.496px;left:1034.25px;width:1000px;text-align:center;"><span>Tools</span></div>
<div class="a t" style="top:103.00px;font-size:12px;line-height:14px;color:#4a4a50;letter-spacing:0.414px;left:1283.71px;width:1000px;text-align:center;"><span>Modifiers</span></div>
<div class="a" style="left:1414px;top:138px;width:23.5px;height:14px;background:#18181a;border-radius:7px;"></div>
<div class="a" style="left:1426.6px;top:140.7px;width:8.6px;height:8.6px;background:#e5483b;border-radius:50%;"></div>
<div class="a t" style="top:138.00px;font-size:13.3px;line-height:15px;color:#ececec;letter-spacing:0.064px;left:1448px;"><span>Background1</span></div>
<div class="a" style="left:1746.5px;top:138.8px;width:11.6px;height:11.6px;background:#62a81f;border-radius:50%;border:0.8px solid #1c2a16;"></div>
<svg class="a" style="left:1765.55px;top:142.8px;" width="9.5" height="5" viewBox="0 0 9.5 5"><path d="M0 0L4.75 5L9.5 0" stroke="#8a8a8e" stroke-width="1.3" fill="none"/></svg>
<div class="a" style="left:1787px;top:135px;width:1px;height:20px;background:#0e0e10;"></div>
<svg class="a" style="left:1800px;top:138px;" width="17" height="14" viewBox="0 0 17 14"><path d="M3.500 3v-2.200h12.500v9h-2.200" stroke="#7a7a7e" stroke-width="1.200" fill="none"/><rect x="0.700" y="3.700" width="12.600" height="9.300" rx="1" fill="none" stroke="#7a7a7e" stroke-width="1.300"/></svg>
<svg class="a" style="left:1829px;top:137px;" width="16" height="16" viewBox="0 0 16 16"><path d="M9.500 1l5.500 5.500-1.500 0.500-2.500 2.500-0.300 3.500-2-2L1 15.500 5 8l-2-2 3.500-0.300L9 3.200z" fill="#7a7a7e"/></svg>
<svg class="a" style="left:1858px;top:137px;" width="14" height="16" viewBox="0 0 14 16"><rect x="0.700" y="7.200" width="11.600" height="7.600" rx="1" fill="none" stroke="#7a7a7e" stroke-width="1.400"/><path d="M3 7v-2.500a3.300 3.300 0 0 1 6.600 0v1" stroke="#7a7a7e" stroke-width="1.400" fill="none"/></svg>
<svg class="a" style="left:1884px;top:137px;" width="16" height="16" viewBox="0 0 16 16"><path d="M2.300 5.500a6.300 6.300 0 1 1 -0.500 4" stroke="#7a7a7e" stroke-width="1.300" fill="none"/><path d="M0.800 2.500l1.300 3.500 3.500-1" stroke="#7a7a7e" stroke-width="1.200" fill="none"/><path d="M8 5.200v5.600M5.200 8h5.600" stroke="#7a7a7e" stroke-width="1.200"/></svg>
<div class="a t" style="top:173.00px;font-size:11px;line-height:12px;color:#c4c4c8;letter-spacing:0.348px;right:343.65px;"><span>Global In/Out</span></div>
<div class="a" style="left:1591px;top:177.3px;width:263px;height:2.6px;background:#5c6068;border-radius:1px;"></div>
<div class="a" style="left:1586.3px;top:174px;width:9.4px;height:9.4px;background:#9c9c9e;border-radius:50%;"></div>
<div class="a" style="left:1848.8px;top:174px;width:9.4px;height:9.4px;background:#9c9c9e;border-radius:50%;"></div>
<div class="a" style="left:1586px;top:189.4px;width:65px;height:19.2px;background:#1b1b1d;border:1px solid #0c0c0d;border-radius:3px;"></div>
<div class="a t" style="top:192.00px;font-size:12px;line-height:14px;color:#f0f0f0;left:1118.50px;width:1000px;text-align:center;"><span>0</span></div>
<div class="a" style="left:1794px;top:189.4px;width:65px;height:19.2px;background:#1b1b1d;border:1px solid #0c0c0d;border-radius:3px;"></div>
<div class="a t" style="top:192.00px;font-size:12px;line-height:14px;color:#f0f0f0;letter-spacing:0.580px;left:1326.79px;width:1000px;text-align:center;"><span>119</span></div>
<div class="a t" style="top:193.00px;font-size:11px;line-height:12px;color:#8c8c90;letter-spacing:0.069px;left:1222.83px;width:1000px;text-align:center;"><span>120</span></div>
<svg class="a" style="left:1589px;top:225px;" width="21" height="21" viewBox="0 0 21 21"><circle cx="7.76" cy="2.99" r="2" fill="#f4f4f4"/><circle cx="13.23" cy="2.98" r="2" fill="#48484c"/><circle cx="17.42" cy="6.49" r="2" fill="#58585c"/><circle cx="18.38" cy="11.88" r="2" fill="#77777b"/><circle cx="15.65" cy="16.62" r="2" fill="#99999d"/><circle cx="10.51" cy="18.50" r="2" fill="#b0b0b4"/><circle cx="5.36" cy="16.63" r="2" fill="#c4c4c8"/><circle cx="2.62" cy="11.90" r="2" fill="#d0d0d4"/><circle cx="3.57" cy="6.51" r="2" fill="#dcdcdc"/><circle cx="10.5" cy="10.5" r="2" fill="#ffffff"/></svg>
<div class="a t" style="top:250.00px;font-size:11.3px;line-height:12px;color:#f2f2f2;letter-spacing:0.125px;left:1099.06px;width:1000px;text-align:center;"><span>Color</span></div>
<div class="a" style="left:1569px;top:267.7px;width:60px;height:2.3px;background:#e64b3d;"></div>
<svg class="a" style="left:1647px;top:227px;" width="25" height="18" viewBox="0 0 25 18"><rect x="2.500" y="1" width="20.500" height="15.500" rx="1" fill="#2c2c31" stroke="#808084" stroke-width="1.100"/><circle cx="8" cy="6" r="1.500" fill="#808084"/><path d="M0 7l7.500 5.500 7.500-6 9.500 6.500" stroke="#808084" stroke-width="1.100" fill="none"/><path d="M3 10l4.500 3 7.500-6 7.500 5v4h-19.500z" fill="#3a3a3f"/></svg>
<div class="a t" style="top:250.00px;font-size:11.3px;line-height:12px;color:#88888c;letter-spacing:-0.102px;left:1159.05px;width:1000px;text-align:center;"><span>Image</span></div>
<svg class="a" style="left:1706px;top:227px;" width="27" height="19" viewBox="0 0 27 19"><defs><linearGradient id="gr2" x1="0" y1="0" x2="1" y2="1"><stop offset="0" stop-color="#26262a"/><stop offset="1" stop-color="#3c3c41"/></linearGradient></defs>
<path d="M20.500 4.500v-3.500h-19.500v15.500h14" fill="url(#gr2)" stroke="#808084" stroke-width="1.100"/>
<circle cx="20" cy="11.500" r="3.300" fill="#212125" stroke="#909094" stroke-width="1.600"/><g stroke="#909094" stroke-width="1.800"><path d="M20 5.800v1.800M20 15.400v1.800M14.300 11.500h1.800M23.900 11.500h1.800M16 7.500l1.300 1.300M22.700 14.200l1.300 1.300M16 15.500l1.300-1.300M22.700 8.800l1.300-1.300"/></g></svg>
<div class="a t" style="top:250.00px;font-size:11.3px;line-height:12px;color:#88888c;letter-spacing:-0.090px;left:1218.95px;width:1000px;text-align:center;"><span>Settings</span></div>
<div class="a t" style="top:283.00px;font-size:11px;line-height:12px;color:#c4c4c8;letter-spacing:0.150px;right:343.85px;"><span>Type</span></div>
<div class="a" style="left:1586px;top:280px;width:273px;height:19px;background:#1b1b1d;border:1px solid #0c0c0d;border-radius:3px;"></div>
<div class="a t" style="top:283.00px;font-size:11.3px;line-height:12px;color:#f2f2f2;letter-spacing:0.003px;left:1593.8px;"><span>Solid Color</span></div>
<svg class="a" style="left:1841.55px;top:286.5px;" width="9.5" height="5" viewBox="0 0 9.5 5"><path d="M0 0L4.75 5L9.5 0" stroke="#b0b0b4" stroke-width="1.3" fill="none"/></svg>
<svg class="a" style="left:1878.9px;top:283.9px;" width="11" height="11" viewBox="0 0 11 11"><path d="M5.500 0.500L10.500 5.500 5.500 10.500 0.500 5.500z" fill="#a2a2a6" stroke="#1a1a1c" stroke-width="0.700"/></svg>
<div class="a" style="left:1414px;top:307px;width:490px;height:1px;background:#0e0e10;"></div>
<svg class="a" style="left:1418px;top:319.5px;" width="10" height="6" viewBox="0 0 10 6"><path d="M0.700 0.700L5 5 9.300 0.700" stroke="#c4c4c8" stroke-width="1.500" fill="none"/></svg>
<div class="a t" style="top:316.00px;font-size:12.5px;line-height:14px;color:#c4c4c8;letter-spacing:-0.024px;left:1435.5px;"><span>Background</span></div>
<div class="a t" style="top:343.00px;font-size:11px;line-height:12px;color:#c4c4c8;letter-spacing:0.176px;right:343.82px;"><span>Color</span></div>
<svg class="a" style="left:1590px;top:344.5px;" width="7" height="10" viewBox="0 0 7 10"><path d="M0.800 0.800L5.800 5 0.800 9.200" stroke="#8a8a8e" stroke-width="1.300" fill="none"/></svg>
<div class="a" style="left:1611px;top:339px;width:74.5px;height:20px;background:#5555ff;border:1px solid #0c0c0d;border-radius:3px;"></div>
<svg class="a" style="left:1699px;top:342px;" width="17" height="17" viewBox="0 0 17 17"><path d="M0.500 16.500c1-2.500 1.500-3.500 3-5l5-5 2.500 2.500-5 5c-1.500 1.500-3 2-5.500 2.500z" fill="#88888c"/><path d="M7.500 5l5 5M9.500 6l3.500-4.500c1.500-1.500 3.500 0.500 2 2l-4 4z" stroke="#88888c" stroke-width="1.800" fill="#88888c"/></svg>
<svg class="a" style="left:1878.9px;top:343.9px;" width="11" height="11" viewBox="0 0 11 11"><path d="M5.500 0.500L10.500 5.500 5.500 10.500 0.500 5.500z" fill="#a2a2a6" stroke="#1a1a1c" stroke-width="0.700"/></svg>
<div class="a t" style="top:368.00px;font-size:11px;line-height:12px;color:#c4c4c8;letter-spacing:0.156px;right:343.84px;"><span>Red</span></div>
<div class="a" style="left:1587px;top:372.2px;width:196px;height:2.4px;background:#161618;border-radius:1px;box-shadow:0 0.5px 0 rgba(255,255,255,0.06);"></div>
<div class="a" style="left:1648.6px;top:368.7px;width:9.4px;height:9.4px;background:#c81a10;border-radius:50%;"></div>
<div class="a" style="left:1794px;top:364px;width:65px;height:20px;background:#1b1b1d;border:1px solid #0c0c0d;border-radius:3px;overflow:hidden;"></div>
<div class="a" style="left:1795px;top:365px;width:63px;height:18px;overflow:hidden;">
<div class="a t" style="top:2.00px;font-size:12px;line-height:14px;color:#f2f2f2;letter-spacing:0.177px;left:3.3px;"><span>0.33333333</span></div>
</div>
<svg class="a" style="left:1878.9px;top:368.9px;" width="11" height="11" viewBox="0 0 11 11"><path d="M5.500 0.500L10.500 5.500 5.500 10.500 0.500 5.500z" fill="#a2a2a6" stroke="#1a1a1c" stroke-width="0.700"/></svg>
<div class="a t" style="top:393.00px;font-size:11px;line-height:12px;color:#c4c4c8;letter-spacing:0.355px;right:343.64px;"><span>Green</span></div>
<div class="a" style="left:1587px;top:397.2px;width:196px;height:2.4px;background:#161618;border-radius:1px;box-shadow:0 0.5px 0 rgba(255,255,255,0.06);"></div>
<div class="a" style="left:1648.6px;top:393.7px;width:9.4px;height:9.4px;background:#1c8422;border-radius:50%;"></div>
<div class="a" style="left:1794px;top:389px;width:65px;height:20px;background:#1b1b1d;border:1px solid #0c0c0d;border-radius:3px;overflow:hidden;"></div>
<div class="a" style="left:1795px;top:390px;width:63px;height:18px;overflow:hidden;">
<div class="a t" style="top:2.00px;font-size:12px;line-height:14px;color:#f2f2f2;letter-spacing:0.177px;left:3.3px;"><span>0.33333333</span></div>
</div>
<svg class="a" style="left:1878.9px;top:393.9px;" width="11" height="11" viewBox="0 0 11 11"><path d="M5.500 0.500L10.500 5.500 5.500 10.500 0.500 5.500z" fill="#a2a2a6" stroke="#1a1a1c" stroke-width="0.700"/></svg>
<div class="a t" style="top:418.00px;font-size:11px;line-height:12px;color:#c4c4c8;letter-spacing:0.759px;right:343.24px;"><span>Blue</span></div>
<div class="a" style="left:1587px;top:422.2px;width:196px;height:2.4px;background:#161618;border-radius:1px;box-shadow:0 0.5px 0 rgba(255,255,255,0.06);"></div>
<div class="a" style="left:1773.8px;top:418.7px;width:9.4px;height:9.4px;background:#0c4a94;border-radius:50%;"></div>
<div class="a" style="left:1794px;top:414px;width:65px;height:20px;background:#1b1b1d;border:1px solid #0c0c0d;border-radius:3px;overflow:hidden;"></div>
<div class="a t" style="top:417.00px;font-size:12px;line-height:14px;color:#f2f2f2;letter-spacing:0.006px;left:1325.70px;width:1000px;text-align:center;"><span>1.0</span></div>
<svg class="a" style="left:1878.9px;top:418.9px;" width="11" height="11" viewBox="0 0 11 11"><path d="M5.500 0.500L10.500 5.500 5.500 10.500 0.500 5.500z" fill="#a2a2a6" stroke="#1a1a1c" stroke-width="0.700"/></svg>
<div class="a t" style="top:443.00px;font-size:11px;line-height:12px;color:#c4c4c8;letter-spacing:0.340px;right:343.66px;"><span>Alpha</span></div>
<div class="a" style="left:1587px;top:447.2px;width:196px;height:2.4px;background:#161618;border-radius:1px;box-shadow:0 0.5px 0 rgba(255,255,255,0.06);"></div>
<div class="a" style="left:1773.8px;top:443.7px;width:9.4px;height:9.4px;background:#9c9c9e;border-radius:50%;"></div>
<div class="a" style="left:1794px;top:439px;width:65px;height:20px;background:#1b1b1d;border:1px solid #0c0c0d;border-radius:3px;overflow:hidden;"></div>
<div class="a t" style="top:442.00px;font-size:12px;line-height:14px;color:#f2f2f2;letter-spacing:0.006px;left:1325.70px;width:1000px;text-align:center;"><span>1.0</span></div>
<svg class="a" style="left:1878.9px;top:443.9px;" width="11" height="11" viewBox="0 0 11 11"><path d="M5.500 0.500L10.500 5.500 5.500 10.500 0.500 5.500z" fill="#a2a2a6" stroke="#1a1a1c" stroke-width="0.700"/></svg>
<div class="a" style="left:0px;top:985px;width:1920px;height:47px;background:#18181b;"></div>
<div class="a" style="left:901px;top:985px;width:118px;height:47px;background:#000000;"></div>
<div class="a" style="left:901px;top:1029.6px;width:118px;height:2.4px;background:#e64b3d;"></div>
<svg class="a" style="left:45px;top:999px;" width="20" height="19" viewBox="0 0 20 19"><circle cx="10" cy="5" r="4.600" fill="#fff"/><circle cx="5" cy="13.600" r="4.600" fill="#fff"/><circle cx="15" cy="13.600" r="4.600" fill="#fff"/><path d="M10 5L5 13.600h10z" fill="#fff"/><path d="M10 9.500v3M10 12.500l-3-1.700M10 12.500l3-1.700" stroke="#18181b" stroke-width="1.100"/></svg>
<div class="a t" style="top:1001.00px;font-size:14.5px;line-height:16px;color:#f4f4f4;font-weight:700;letter-spacing:-0.702px;left:72.5px;"><span>DaVinci Resolve 20</span></div>
<div class="a t" style="top:1012.00px;font-size:13.3px;line-height:15px;color:#85858a;letter-spacing:0.093px;left:581.8px;"><span>Media</span></div>
<div class="a t" style="top:1012.00px;font-size:13.3px;line-height:15px;color:#85858a;letter-spacing:-0.200px;left:710px;"><span>Cut</span></div>
<div class="a t" style="top:1012.00px;font-size:13.3px;line-height:15px;color:#85858a;letter-spacing:-0.207px;left:829.2px;"><span>Edit</span></div>
<div class="a t" style="top:1012.00px;font-size:13.3px;line-height:15px;color:#ffffff;font-weight:700;letter-spacing:-0.658px;left:939.7px;"><span>Fusion</span></div>
<div class="a t" style="top:1012.00px;font-size:13.3px;line-height:15px;color:#85858a;letter-spacing:-0.047px;left:1064.2px;"><span>Color</span></div>
<div class="a t" style="top:1012.00px;font-size:13.3px;line-height:15px;color:#85858a;letter-spacing:0.163px;left:1176px;"><span>Fairlight</span></div>
<div class="a t" style="top:1012.00px;font-size:13.3px;line-height:15px;color:#85858a;letter-spacing:0.052px;left:1299.3px;"><span>Deliver</span></div>
<svg class="a" style="left:592px;top:991px;" width="19" height="17" viewBox="0 0 19 17"><path d="M3 0.500h13M1.500 2.500h16" stroke="#77777c" stroke-width="0.900"/><rect x="0.600" y="4.600" width="17.800" height="11.800" rx="1.500" fill="#2a2a2e" stroke="#77777c" stroke-width="1.200"/><circle cx="5" cy="8" r="1.200" fill="#77777c"/><path d="M3 14.500l3.500-3.500 2.500 2 3.500-4 3.500 5.500z" fill="#77777c"/></svg>
<svg class="a" style="left:707px;top:990px;" width="26" height="18" viewBox="0 0 26 18"><path d="M14.500 0.500l-3 17" stroke="#77777c" stroke-width="1.200"/><path d="M9.500 3.500h3l-1.800 10.500h-3z" fill="none" stroke="#77777c" stroke-width="1.100"/><path d="M16 3.500h8l-1.800 10.500h-8z" fill="#333338" stroke="#77777c" stroke-width="1.100"/><path d="M2 5.500h6M0.500 8.700h7M3 12h4" stroke="#77777c" stroke-width="1.100"/><circle cx="17.500" cy="6" r="0.700" fill="#77777c"/><circle cx="21.800" cy="6" r="0.700" fill="#77777c"/><circle cx="16.800" cy="11.500" r="0.700" fill="#77777c"/><circle cx="21" cy="11.500" r="0.700" fill="#77777c"/></svg>
<svg class="a" style="left:830px;top:990px;" width="23" height="19" viewBox="0 0 23 19"><path d="M11.800 2v16.500" stroke="#77777c" stroke-width="1.100"/><circle cx="11.800" cy="1.500" r="1.200" fill="#77777c"/><path d="M1.500 6.500h7.500M15 6.500h4.500M3.800 10.600h5.200M15 10.600h6M1.500 14.500h7.500M15 14.500h5.500" stroke="#77777c" stroke-width="2.500" stroke-linecap="round"/></svg>
<svg class="a" style="left:948px;top:989px;" width="23" height="20" viewBox="0 0 23 20"><path d="M12 17.500L20 4" stroke="#c8c8cc" stroke-width="2.800" stroke-linecap="round"/><path d="M12.500 16.500L19.500 5" stroke="#77777c" stroke-width="0.800"/>
<path d="M6 17c-2-1.500-2-4 0-5.500s4-1 5.500-3" stroke="#3a3f1e" stroke-width="2.600" fill="none"/>
<path d="M13.500 0.500l0.800 2 2 0.800-2 0.800-0.800 2-0.800-2-2-0.800 2-0.800z M6 4l0.700 1.700 1.700 0.700-1.700 0.700-0.700 1.700-0.700-1.700-1.700-0.700 1.700-0.700z M10 7.500l0.600 1.400 1.400 0.600-1.400 0.600-0.600 1.400-0.600-1.400-1.400-0.600 1.400-0.600z" fill="#e8e05a"/></svg>
<svg class="a" style="left:1070px;top:989.5px;" width="20" height="20" viewBox="0 0 20 20"><circle cx="7.50" cy="3.14" r="1.45" fill="#85858a"/><circle cx="12.49" cy="3.14" r="1.45" fill="#3a3a3f"/><circle cx="16.32" cy="6.34" r="1.45" fill="#4a4a4f"/><circle cx="17.19" cy="11.26" r="1.45" fill="#5a5a5f"/><circle cx="14.70" cy="15.59" r="1.45" fill="#6a6a6f"/><circle cx="10.01" cy="17.30" r="1.45" fill="#77777c"/><circle cx="5.31" cy="15.60" r="1.45" fill="#77777c"/><circle cx="2.81" cy="11.27" r="1.45" fill="#77777c"/><circle cx="3.67" cy="6.36" r="1.45" fill="#7c7c80"/><circle cx="10" cy="10" r="1.45" fill="#77777c"/></svg>
<svg class="a" style="left:1193px;top:991px;" width="15" height="17" viewBox="0 0 15 17"><path d="M4.500 13.500v-10.500l9-2.500v10.500" stroke="#77777c" stroke-width="1.500" fill="none"/><path d="M4.500 3l9-2.500v2.800l-9 2.500z" fill="#77777c"/><ellipse cx="2.800" cy="13.800" rx="2.700" ry="2.100" fill="#77777c"/><ellipse cx="11.800" cy="11.300" rx="2.700" ry="2.100" fill="#77777c"/></svg>
<svg class="a" style="left:1311px;top:990px;" width="18" height="19" viewBox="0 0 18 19"><path d="M16.500 0.800c-5 0-9 3-11 8.500l3.500 3.500c5.500-2 8.500-6.500 7.500-12z" fill="none" stroke="#77777c" stroke-width="1.200"/><circle cx="11.500" cy="6" r="1.700" fill="none" stroke="#77777c" stroke-width="1"/><path d="M6 8l-4 0.500-1.500 3 3.500-0.500M10 12.500v3.500l-3 2 0-3.500" fill="none" stroke="#77777c" stroke-width="1.100"/><path d="M4 13l-2.500 2.500M5.500 14.500l-2 2" stroke="#77777c" stroke-width="1"/></svg>
<svg class="a" style="left:1829px;top:1001px;" width="15" height="14" viewBox="0 0 15 14"><path d="M7.500 0.500L0.300 7h2v6.700h3.700v-4.200h3v4.200h3.700v-6.700h2z" fill="#85858a"/></svg>
<svg class="a" style="left:1877.7px;top:1000.7px;" width="16" height="16" viewBox="0 0 16 16"><circle cx="7.800" cy="7.800" r="4.300" fill="none" stroke="#85858a" stroke-width="2.600"/><rect x="6.400" y="-0.300" width="2.800" height="4" fill="#85858a" transform="rotate(0 7.800 7.800)"/><rect x="6.400" y="-0.300" width="2.800" height="4" fill="#85858a" transform="rotate(45 7.800 7.800)"/><rect x="6.400" y="-0.300" width="2.800" height="4" fill="#85858a" transform="rotate(90 7.800 7.800)"/><rect x="6.400" y="-0.300" width="2.800" height="4" fill="#85858a" transform="rotate(135 7.800 7.800)"/><rect x="6.400" y="-0.300" width="2.800" height="4" fill="#85858a" transform="rotate(180 7.800 7.800)"/><rect x="6.400" y="-0.300" width="2.800" height="4" fill="#85858a" transform="rotate(225 7.800 7.800)"/><rect x="6.400" y="-0.300" width="2.800" height="4" fill="#85858a" transform="rotate(270 7.800 7.800)"/><rect x="6.400" y="-0.300" width="2.800" height="4" fill="#85858a" transform="rotate(315 7.800 7.800)"/></svg>
<div class="a" style="left:0px;top:1032px;width:1920px;height:48px;background:linear-gradient(90deg,#e2dcd9 0,#e5dbd8 10%,#ebd9d7 22%,#e2d9e6 23.300%,#dbe3f1 24.500%,#d8e4f2 40%,#d3e2f3 60%,#d6dff1 69%,#e8d6e2 75%,#f1dcd8 80%,#eee1da 100%);"></div>
<svg class="a" style="left:20px;top:1044px;" width="24" height="24" viewBox="0 0 24 24"><defs><linearGradient id="wg" x1="0" y1="0" x2="1" y2="1"><stop offset="0" stop-color="#4cc4f6"/><stop offset="1" stop-color="#0a6fd0"/></linearGradient></defs>
<rect x="0.500" y="0.500" width="11" height="11" fill="url(#wg)"/><rect x="12.500" y="0.500" width="11" height="11" fill="url(#wg)"/><rect x="0.500" y="12.500" width="11" height="11" fill="url(#wg)"/><rect x="12.500" y="12.500" width="11" height="11" fill="url(#wg)"/></svg>
<svg class="a" style="left:65px;top:1044px;" width="24" height="24" viewBox="0 0 24 24"><circle cx="10" cy="10" r="7.600" fill="none" stroke="#1c1c1e" stroke-width="2.200"/><path d="M15.500 15.500l6 6" stroke="#1c1c1e" stroke-width="2.600" stroke-linecap="round"/></svg>
<svg class="a" style="left:109px;top:1045px;" width="24" height="23" viewBox="0 0 24 23"><defs><linearGradient id="tv1" x1="0" y1="0" x2="1" y2="1"><stop offset="0" stop-color="#ffffff"/><stop offset="1" stop-color="#c8c8cc"/></linearGradient><linearGradient id="tv2" x1="0" y1="0" x2="0" y2="1"><stop offset="0" stop-color="#4a4a4c"/><stop offset="1" stop-color="#101012"/></linearGradient></defs>
<rect x="7" y="0.500" width="16.500" height="14.500" rx="1.500" fill="url(#tv1)"/><rect x="0.500" y="6.500" width="17.500" height="15.500" rx="1.500" fill="url(#tv2)"/><rect x="7" y="6.500" width="11" height="8.500" fill="#b8b8bc" fill-opacity="0.850"/></svg>
<svg class="a" style="left:152px;top:1044px;" width="25" height="24" viewBox="0 0 25 24"><defs><linearGradient id="cp1" x1="0.3" y1="0" x2="0.5" y2="1"><stop offset="0" stop-color="#2478e8"/><stop offset="0.400" stop-color="#28b8c8"/><stop offset="0.700" stop-color="#8ad048"/><stop offset="1" stop-color="#f8c030"/></linearGradient><linearGradient id="cp2" x1="0.6" y1="0" x2="0.4" y2="1"><stop offset="0" stop-color="#9a5cf0"/><stop offset="0.450" stop-color="#e858b0"/><stop offset="0.800" stop-color="#f06848"/><stop offset="1" stop-color="#f89838"/></linearGradient></defs>
<path d="M8.500 1h6c2 0 3.200 1 3.800 3l1 3.500h-4.500l-1-3c-0.400-1.200-1.200-1.800-2.200-1.800-2.500 0-3.500 3-4.500 7s-2 7.800-3.500 9.800c-3 0-4.800-2-3.800-5l3-9.500c0.900-2.800 3-4 5.700-4z" fill="url(#cp1)"/>
<path d="M16.500 23h-6c-2 0-3.200-1-3.800-3l-1-3.500h4.500l1 3c0.400 1.200 1.200 1.800 2.200 1.800 2.500 0 3.500-3 4.500-7s2-7.800 3.500-9.800c3 0 4.800 2 3.800 5l-3 9.500c-0.900 2.800-3 4-5.700 4z" fill="url(#cp2)"/><path d="M11 3c1.500-0.300 2.500 0.500 3 2l1 3h-2.500c-1.500 0-2.500-1-2.500-2.500z" fill="#1c4fc0" fill-opacity="0.700"/></svg>
<svg class="a" style="left:197px;top:1045px;" width="24" height="22" viewBox="0 0 24 22"><path d="M0.500 3a2 2 0 0 1 2-2h5.500l2.500 2.500h11a2 2 0 0 1 2 2v3h-23z" fill="#e9a51c"/><rect x="0.500" y="4.500" width="23" height="17" rx="2" fill="#fcc93a"/><path d="M5 21.500v-5a2 2 0 0 1 2-2h10a2 2 0 0 1 2 2v5z" fill="#1f7fd8"/><path d="M0.500 19.500h23v0a2 2 0 0 1 -2 2h-19a2 2 0 0 1 -2-2z" fill="#e3a728" fill-opacity="0.600"/></svg>
<svg class="a" style="left:241px;top:1044px;" width="24" height="24" viewBox="0 0 24 24"><path d="M7.500 6v-2.500a2.500 2.500 0 0 1 2.500-2.500h4a2.500 2.500 0 0 1 2.500 2.500v2.500" fill="none" stroke="#3fb6f0" stroke-width="2"/><path d="M0.500 6h23v13.500a4 4 0 0 1 -4 4h-15a4 4 0 0 1 -4-4z" fill="#155aa8"/>
<rect x="7.300" y="9.800" width="4.300" height="4.300" fill="#f25022"/><rect x="12.400" y="9.800" width="4.300" height="4.300" fill="#7fba00"/><rect x="7.300" y="14.900" width="4.300" height="4.300" fill="#00a4ef"/><rect x="12.400" y="14.900" width="4.300" height="4.300" fill="#ffb900"/></svg>
<svg class="a" style="left:284px;top:1043px;" width="26" height="26" viewBox="0 0 26 26"><g transform="rotate(45 13 13)"><rect x="4.500" y="4.500" width="8" height="8" rx="1.500" fill="#f2777a"/><rect x="13.500" y="4.500" width="8" height="8" rx="1.500" fill="#7bc47f"/><rect x="4.500" y="13.500" width="8" height="8" rx="1.500" fill="#8ab4f0"/><rect x="13.500" y="13.500" width="8" height="8" rx="1.500" fill="#f5e07a"/></g><circle cx="13" cy="6.500" r="1.300" fill="#fff"/><circle cx="17.500" cy="12" r="1.300" fill="#fff"/><path d="M13 6.500l4.500 5.500" stroke="#fff" stroke-width="1"/></svg>
<svg class="a" style="left:328.5px;top:1044px;" width="24" height="24" viewBox="0 0 24 24"><circle cx="12" cy="12" r="11.500" fill="#fff"/><path d="M12 0.500a11.500 11.500 0 0 1 9.960 5.750h-9.960a5.750 5.750 0 0 0 -4.980 2.880l-4.980-2.880a11.500 11.500 0 0 1 9.960-5.750z" fill="#ea4335"/><path d="M21.960 6.250a11.500 11.500 0 0 1 -9.960 17.250l4.980-8.620a5.750 5.750 0 0 0 0-5.750l0-2.880z" fill="#fbbc05"/><path d="M12 23.500a11.500 11.500 0 0 1 -9.960-17.250l4.980 8.620a5.750 5.750 0 0 0 4.980 2.880l4.980-2.870z" fill="#34a853"/><path d="M2.040 6.250l4.980 8.620a5.750 5.750 0 0 1 0-5.750z" fill="#ea4335"/><path d="M16.980 14.880l-4.980 8.620a11.500 11.500 0 0 0 9.960-17.250h-9.960a5.750 5.750 0 0 1 4.980 8.630z" fill="#fbbc05"/><circle cx="12" cy="12" r="5.400" fill="#fff"/><circle cx="12" cy="12" r="4.300" fill="#4285f4"/></svg>
<svg class="a" style="left:372.5px;top:1044px;" width="24" height="24" viewBox="0 0 24 24"><defs><linearGradient id="eg1" x1="0" y1="0" x2="1" y2="0.300"><stop offset="0" stop-color="#2bb8e8"/><stop offset="0.600" stop-color="#35c890"/><stop offset="1" stop-color="#6fdc4a"/></linearGradient><linearGradient id="eg2" x1="0" y1="0" x2="0" y2="1"><stop offset="0" stop-color="#1f8fd8"/><stop offset="1" stop-color="#0c52a8"/></linearGradient></defs>
<path d="M12 0.500c6.500 0 11.500 4.500 11.500 10 0 3.500-2.500 6-6 6-2.500 0-4-1-4-2.500 0-1 1-1.500 1-3 0-2.500-2.500-4.500-5.500-4.500-4 0-7.500 3-8.400 7-1-7 4.400-13 11.400-13z" fill="url(#eg1)"/>
<path d="M0.600 13.500c0.900-4 4.400-7 8.400-7 3 0 5.500 2 5.500 4.500-0.500-1.500-2-2.500-4-2.500-3 0-5 2.500-5 5.500 0 4.500 3.500 8.500 9 9.300-7.500 1.500-14.400-3.300-13.900-9.800z" fill="url(#eg2)"/><path d="M5.500 14c0 4.500 3.500 8.500 9 9.300 3.500-0.500 6.500-2.500 8-5.300-1.500 1-3.500 1.500-5.500 1.200-3.500-0.500-6-3-6-6 0-1 0.300-2 0.800-2.800-3.300-0.900-6.300 1-6.300 3.600z" fill="#1565b8"/></svg>
<svg class="a" style="left:417px;top:1044px;" width="24" height="24" viewBox="0 0 24 24"><path d="M17.500 0.500l6 2.800v17.400l-6 2.800-10-9.500-4.500 3.500-2.500-1.300v-8.400l2.500-1.300 4.500 3.500z" fill="#2196e8"/><path d="M17.500 0.500l6 2.800v17.400l-6 2.800z" fill="#1a7fd0" fill-opacity="0.700"/><path d="M17.500 6.500l-7 5.500 7 5.500z" fill="#e6dfde"/><path d="M0.500 7.800l2.500-1.300 4.500 5.500-4.500 5.500-2.500-1.300 3.500-4.200z" fill="#0e6ab8" fill-opacity="0.600"/></svg>
<div class="a" style="left:454px;top:1037px;width:38px;height:38.5px;background:rgba(255,255,255,0.480);border:1px solid rgba(255,255,255,0.550);border-radius:4.500px;"></div>
<svg class="a" style="left:463.5px;top:1046.5px;" width="19" height="19" viewBox="0 0 19 19"><defs><linearGradient id="dv" x1="0" y1="1" x2="1" y2="0"><stop offset="0" stop-color="#e8d820"/><stop offset="0.500" stop-color="#28b8e8"/><stop offset="1" stop-color="#e84838"/></linearGradient></defs>
<rect x="0.400" y="0.400" width="18.200" height="18.200" rx="4.200" fill="#1b2a45" stroke="url(#dv)" stroke-width="0.800"/><circle cx="9.500" cy="6.200" r="2.600" fill="#28c0f0"/><circle cx="6" cy="12.300" r="2.800" fill="#e6e020"/><circle cx="13" cy="12.300" r="2.800" fill="#f04a3c"/><path d="M9.500 7.500v3" stroke="#9adcf0" stroke-width="1"/></svg>
<div class="a" style="left:465.3px;top:1072px;width:15.5px;height:3px;background:#0a68d0;border-radius:1.500px;"></div>
<svg class="a" style="left:505px;top:1043.8px;" width="24" height="24" viewBox="0 0 24 24"><defs><linearGradient id="pl" x1="0.200" y1="0" x2="0.800" y2="1"><stop offset="0" stop-color="#f5883a"/><stop offset="0.550" stop-color="#e06a7a"/><stop offset="1" stop-color="#9a5cd0"/></linearGradient></defs>
<circle cx="12" cy="12" r="11" fill="#2a2a2c" stroke="url(#pl)" stroke-width="1.800"/><path d="M8.800 6l9 6-9 6z" fill="#ffffff"/></svg>
<div class="a" style="left:206px;top:1072px;width:6px;height:3px;background:#8e8a8c;border-radius:1.500px;"></div>
<div class="a" style="left:294px;top:1072px;width:6px;height:3px;background:#8e8a8c;border-radius:1.500px;"></div>
<div class="a" style="left:338px;top:1072px;width:6px;height:3px;background:#8e8a8c;border-radius:1.500px;"></div>
<div class="a" style="left:382px;top:1072px;width:6px;height:3px;background:#8e8a8c;border-radius:1.500px;"></div>
<div class="a" style="left:426px;top:1072px;width:6px;height:3px;background:#8e8a8c;border-radius:1.500px;"></div>
<div class="a" style="left:514px;top:1072px;width:6px;height:3px;background:#8e8a8c;border-radius:1.500px;"></div>
<svg class="a" style="left:1608px;top:1052px;" width="12" height="8" viewBox="0 0 12 8"><path d="M1 7L6 1.500 11 7" stroke="#1c1c1e" stroke-width="1.500" fill="none"/></svg>
<svg class="a" style="left:1639px;top:1049px;" width="15" height="14" viewBox="0 0 15 14"><path d="M0.500 4h14M0.500 10h14" stroke="#1c1c1e" stroke-width="1.800"/><path d="M10 1v6M5 7v6" stroke="#1c1c1e" stroke-width="2.400"/></svg>
<svg class="a" style="left:1669px;top:1051px;" width="16" height="12" viewBox="0 0 16 12"><path d="M1.200 0.500v11M14.800 0.500v11" stroke="#1c1c1e" stroke-width="1.800"/><path d="M4.500 11.500v-10l3.500 5 3.500-5v10" stroke="#1c1c1e" stroke-width="1.800" fill="none" stroke-linejoin="miter"/></svg>
<svg class="a" style="left:1703px;top:1048px;" width="14" height="17" viewBox="0 0 14 17"><rect x="4.300" y="0.800" width="5.400" height="9.400" rx="2.700" fill="none" stroke="#2a62c8" stroke-width="1.400"/><path d="M1.300 7.500a5.700 5.700 0 0 0 11.400 0M7 13.300v3" stroke="#2a62c8" stroke-width="1.300" fill="none"/></svg>
<svg class="a" style="left:1733.5px;top:1049px;" width="17" height="13" viewBox="0 0 17 13"><path d="M1 4.500a10.500 10.500 0 0 1 15 0M3.500 7.300a7 7 0 0 1 10 0M6 10a3.500 3.500 0 0 1 5 0" stroke="#1c1c1e" stroke-width="1.300" fill="none"/><circle cx="8.500" cy="11.700" r="1.200" fill="#1c1c1e"/></svg>
<svg class="a" style="left:1758px;top:1049px;" width="17" height="14" viewBox="0 0 17 14"><path d="M0.700 4.700h2.800l3.500-3.200v11l-3.500-3.200h-2.800z" fill="none" stroke="#1c1c1e" stroke-width="1.200" stroke-linejoin="round"/><path d="M9.500 4.500a3.500 3.500 0 0 1 0 5M11.800 2.700a6 6 0 0 1 0 8.600M14.100 1a8.500 8.500 0 0 1 0 12" stroke="#1c1c1e" stroke-width="1.100" fill="none"/></svg>
<svg class="a" style="left:1781.5px;top:1048px;" width="17" height="15" viewBox="0 0 17 15"><rect x="1" y="5" width="13" height="8" rx="1.800" fill="none" stroke="#1c1c1e" stroke-width="1.300"/><rect x="3" y="7" width="9" height="4" fill="#1c1c1e"/><path d="M15 7.500v3" stroke="#1c1c1e" stroke-width="1.800"/><path d="M4 0.500l-2.500 5h2l-1.200 3.500 4-5h-2.300z" fill="#1c1c1e" stroke="#eee1da" stroke-width="0.500"/></svg>
<div class="a t" style="top:1041.00px;font-size:12px;line-height:14px;color:#1c1c1e;letter-spacing:-0.510px;right:43.91px;"><span>10.07</span></div>
<div class="a t" style="top:1057.00px;font-size:12px;line-height:14px;color:#1c1c1e;letter-spacing:0.104px;right:43.30px;"><span>22/09/2025</span></div>
<svg class="a" style="left:1885px;top:1048px;" width="15" height="17" viewBox="0 0 15 17"><path d="M6.500 1.500c-3 0-4.500 2.500-4.500 5v3.500l-1.500 2.500h12l-1.500-2.500v-3" fill="#1c1c1e"/><path d="M4.800 14a1.800 1.800 0 0 0 3.500 0z" fill="#1c1c1e"/><path d="M4.500 5.500h3l-3 3.500h3" stroke="#eee1da" stroke-width="1" fill="none"/><path d="M10 1h3.500l-3.500 4h3.500" stroke="#1c1c1e" stroke-width="1.100" fill="none"/></svg>
<div class="a" style="left:1017px;top:366px;width:522px;height:429px;border-radius:8px;background:#28282e;box-shadow:0 0 0 1px rgba(64,64,70,0.950),0 14px 42px rgba(0,0,0,0.400),0 2px 10px rgba(0,0,0,0.300);overflow:hidden;"><div class="a" style="left:0;top:0;width:100%;height:30px;background:linear-gradient(90deg,#ebeff7 0,#f1f2f8 35%,#f8f3f5 60%,#f9f1ee 100%);"></div></div>
<svg class="a" style="left:1027px;top:374px;" width="12.5" height="12.5" viewBox="0 0 12.5 12.5"><rect x="0.300" y="0.300" width="11.900" height="11.900" rx="2.600" fill="#1d2b48" stroke="#3a4a6a" stroke-width="0.500"/><circle cx="6.250" cy="4" r="1.700" fill="#28c0f0"/><circle cx="3.900" cy="8" r="1.800" fill="#e6e020"/><circle cx="8.600" cy="8" r="1.800" fill="#f04a3c"/></svg>
<div class="a t" style="top:374.00px;font-size:12px;line-height:14px;color:#101012;letter-spacing:0.053px;left:1046.8px;"><span>Color</span></div>
<svg class="a" style="left:1518.7px;top:374.8px;" width="10.4" height="10.4" viewBox="0 0 10.4 10.4"><path d="M0.300 0.300L10.100 10.100M10.100 0.300L0.300 10.100" stroke="#111" stroke-width="1.100" fill="none"/></svg>
<div class="a t" style="top:409.00px;font-size:12px;line-height:14px;color:#88888c;letter-spacing:0.065px;left:1028.3px;"><span>Basic colors</span></div>
<div class="a" style="left:1031px;top:433px;width:22px;height:18px;background:rgb(0,0,0);border:1px solid #09090a;"></div>
<div class="a" style="left:1031px;top:457px;width:22px;height:18px;background:rgb(0,0,127);border:1px solid #09090a;"></div>
<div class="a" style="left:1031px;top:481px;width:22px;height:18px;background:rgb(0,0,255);border:1px solid #09090a;"></div>
<div class="a" style="left:1031px;top:505px;width:22px;height:18px;background:rgb(85,0,0);border:1px solid #09090a;"></div>
<div class="a" style="left:1031px;top:529px;width:22px;height:18px;background:rgb(85,0,127);border:1px solid #09090a;"></div>
<div class="a" style="left:1031px;top:553px;width:22px;height:18px;background:rgb(85,0,255);border:1px solid #09090a;"></div>
<div class="a" style="left:1059px;top:433px;width:22px;height:18px;background:rgb(170,0,0);border:1px solid #09090a;"></div>
<div class="a" style="left:1059px;top:457px;width:22px;height:18px;background:rgb(170,0,127);border:1px solid #09090a;"></div>
<div class="a" style="left:1059px;top:481px;width:22px;height:18px;background:rgb(170,0,255);border:1px solid #09090a;"></div>
<div class="a" style="left:1059px;top:505px;width:22px;height:18px;background:rgb(255,0,0);border:1px solid #09090a;"></div>
<div class="a" style="left:1059px;top:529px;width:22px;height:18px;background:rgb(255,0,127);border:1px solid #09090a;"></div>
<div class="a" style="left:1059px;top:553px;width:22px;height:18px;background:rgb(255,0,255);border:1px solid #09090a;"></div>
<div class="a" style="left:1087px;top:433px;width:22px;height:18px;background:rgb(0,85,0);border:1px solid #09090a;"></div>
<div class="a" style="left:1087px;top:457px;width:22px;height:18px;background:rgb(0,85,127);border:1px solid #09090a;"></div>
<div class="a" style="left:1087px;top:481px;width:22px;height:18px;background:rgb(0,85,255);border:1px solid #09090a;"></div>
<div class="a" style="left:1087px;top:505px;width:22px;height:18px;background:rgb(85,85,0);border:1px solid #09090a;"></div>
<div class="a" style="left:1087px;top:529px;width:22px;height:18px;background:rgb(85,85,127);border:1px solid #09090a;"></div>
<div class="a" style="left:1087px;top:553px;width:22px;height:18px;background:rgb(85,85,255);border:1px solid #09090a;"></div>
<div class="a" style="left:1115px;top:433px;width:22px;height:18px;background:rgb(170,85,0);border:1px solid #09090a;"></div>
<div class="a" style="left:1115px;top:457px;width:22px;height:18px;background:rgb(170,85,127);border:1px solid #09090a;"></div>
<div class="a" style="left:1115px;top:481px;width:22px;height:18px;background:rgb(170,85,255);border:1px solid #09090a;"></div>
<div class="a" style="left:1115px;top:505px;width:22px;height:18px;background:rgb(255,85,0);border:1px solid #09090a;"></div>
<div class="a" style="left:1115px;top:529px;width:22px;height:18px;background:rgb(255,85,127);border:1px solid #09090a;"></div>
<div class="a" style="left:1115px;top:553px;width:22px;height:18px;background:rgb(255,85,255);border:1px solid #09090a;"></div>
<div class="a" style="left:1143px;top:433px;width:22px;height:18px;background:rgb(0,170,0);border:1px solid #09090a;"></div>
<div class="a" style="left:1143px;top:457px;width:22px;height:18px;background:rgb(0,170,127);border:1px solid #09090a;"></div>
<div class="a" style="left:1143px;top:481px;width:22px;height:18px;background:rgb(0,170,255);border:1px solid #09090a;"></div>
<div class="a" style="left:1143px;top:505px;width:22px;height:18px;background:rgb(85,170,0);border:1px solid #09090a;"></div>
<div class="a" style="left:1143px;top:529px;width:22px;height:18px;background:rgb(85,170,127);border:1px solid #09090a;"></div>
<div class="a" style="left:1143px;top:553px;width:22px;height:18px;background:rgb(85,170,255);border:1px solid #09090a;"></div>
<div class="a" style="left:1171px;top:433px;width:22px;height:18px;background:rgb(170,170,0);border:1px solid #09090a;"></div>
<div class="a" style="left:1171px;top:457px;width:22px;height:18px;background:rgb(170,170,127);border:1px solid #09090a;"></div>
<div class="a" style="left:1171px;top:481px;width:22px;height:18px;background:rgb(170,170,255);border:1px solid #09090a;"></div>
<div class="a" style="left:1171px;top:505px;width:22px;height:18px;background:rgb(255,170,0);border:1px solid #09090a;"></div>
<div class="a" style="left:1171px;top:529px;width:22px;height:18px;background:rgb(255,170,127);border:1px solid #09090a;"></div>
<div class="a" style="left:1171px;top:553px;width:22px;height:18px;background:rgb(255,170,255);border:1px solid #09090a;"></div>
<div class="a" style="left:1199px;top:433px;width:22px;height:18px;background:rgb(0,255,0);border:1px solid #09090a;"></div>
<div class="a" style="left:1199px;top:457px;width:22px;height:18px;background:rgb(0,255,127);border:1px solid #09090a;"></div>
<div class="a" style="left:1199px;top:481px;width:22px;height:18px;background:rgb(0,255,255);border:1px solid #09090a;"></div>
<div class="a" style="left:1199px;top:505px;width:22px;height:18px;background:rgb(85,255,0);border:1px solid #09090a;"></div>
<div class="a" style="left:1199px;top:529px;width:22px;height:18px;background:rgb(85,255,127);border:1px solid #09090a;"></div>
<div class="a" style="left:1199px;top:553px;width:22px;height:18px;background:rgb(85,255,255);border:1px solid #09090a;"></div>
<div class="a" style="left:1227px;top:433px;width:22px;height:18px;background:rgb(170,255,0);border:1px solid #09090a;"></div>
<div class="a" style="left:1227px;top:457px;width:22px;height:18px;background:rgb(170,255,127);border:1px solid #09090a;"></div>
<div class="a" style="left:1227px;top:481px;width:22px;height:18px;background:rgb(170,255,255);border:1px solid #09090a;"></div>
<div class="a" style="left:1227px;top:505px;width:22px;height:18px;background:rgb(255,255,0);border:1px solid #09090a;"></div>
<div class="a" style="left:1227px;top:529px;width:22px;height:18px;background:rgb(255,255,127);border:1px solid #09090a;"></div>
<div class="a" style="left:1227px;top:553px;width:22px;height:18px;background:rgb(255,255,255);border:1px solid #09090a;"></div>
<div class="a" style="left:1028px;top:580px;width:224px;height:23px;border:1px solid #3c3c42;border-radius:11.5px;"></div>
<div class="a t" style="top:585.00px;font-size:12px;line-height:14px;color:#b4b4b8;letter-spacing:-0.003px;left:640.00px;width:1000px;text-align:center;"><span>Pick Screen Color</span></div>
<div class="a" style="left:1264px;top:416px;width:222.5px;height:202px;background:#0e0e10;"></div>
<div class="a" style="left:1265px;top:417px;width:220px;height:200px;background:linear-gradient(rgba(200,200,200,0),rgba(200,200,200,1)),linear-gradient(90deg,rgb(200,0,0) 0.450%,rgb(200,0,200) 17.000%,rgb(0,0,200) 33.600%,rgb(0,200,200) 50.200%,rgb(0,200,0) 66.800%,rgb(200,200,0) 83.400%,rgb(200,0,0) 100%);"></div>
<div class="a" style="left:1264px;top:617px;width:222.5px;height:1.5px;background:#222227;"></div>
<div class="a" style="left:1485px;top:416px;width:1.5px;height:202px;background:#222227;"></div>
<div class="a" style="left:1329px;top:483px;width:20px;height:2.2px;background:#000;"></div>
<div class="a" style="left:1338px;top:474px;width:2.2px;height:20px;background:#000;"></div>
<div class="a" style="left:1502px;top:416px;width:15.4px;height:201.8px;background:#34343a;"></div>
<div class="a" style="left:1502px;top:416px;width:14.4px;height:201px;background:#0e0e10;"></div>
<div class="a" style="left:1503px;top:417px;width:13.4px;height:200px;background:linear-gradient(#5555ff,#000);"></div>
<svg class="a" style="left:1516.5px;top:412.5px;" width="6" height="10" viewBox="0 0 6 10"><path d="M0.300 5L5.600 0.300v9.400z" fill="#9c9c9e"/></svg>
<div class="a t" style="top:651.00px;font-size:12px;line-height:14px;color:#88888c;letter-spacing:0.276px;left:1028.3px;"><span>Custom colors</span></div>
<div class="a" style="left:1031px;top:675.3px;width:22px;height:17.3px;background:#ffffff;border:1px solid #09090a;"></div>
<div class="a" style="left:1031px;top:699.4499999999999px;width:22px;height:17.3px;background:#ffffff;border:1px solid #09090a;"></div>
<div class="a" style="left:1059px;top:675.3px;width:22px;height:17.3px;background:#ffffff;border:1px solid #09090a;"></div>
<div class="a" style="left:1059px;top:699.4499999999999px;width:22px;height:17.3px;background:#ffffff;border:1px solid #09090a;"></div>
<div class="a" style="left:1087px;top:675.3px;width:22px;height:17.3px;background:#ffffff;border:1px solid #09090a;"></div>
<div class="a" style="left:1087px;top:699.4499999999999px;width:22px;height:17.3px;background:#ffffff;border:1px solid #09090a;"></div>
<div class="a" style="left:1115px;top:675.3px;width:22px;height:17.3px;background:#ffffff;border:1px solid #09090a;"></div>
<div class="a" style="left:1115px;top:699.4499999999999px;width:22px;height:17.3px;background:#ffffff;border:1px solid #09090a;"></div>
<div class="a" style="left:1143px;top:675.3px;width:22px;height:17.3px;background:#ffffff;border:1px solid #09090a;"></div>
<div class="a" style="left:1143px;top:699.4499999999999px;width:22px;height:17.3px;background:#ffffff;border:1px solid #09090a;"></div>
<div class="a" style="left:1171px;top:675.3px;width:22px;height:17.3px;background:#ffffff;border:1px solid #09090a;"></div>
<div class="a" style="left:1171px;top:699.4499999999999px;width:22px;height:17.3px;background:#ffffff;border:1px solid #09090a;"></div>
<div class="a" style="left:1199px;top:675.3px;width:22px;height:17.3px;background:#ffffff;border:1px solid #09090a;"></div>
<div class="a" style="left:1199px;top:699.4499999999999px;width:22px;height:17.3px;background:#ffffff;border:1px solid #09090a;"></div>
<div class="a" style="left:1227px;top:675.3px;width:22px;height:17.3px;background:#ffffff;border:1px solid #09090a;"></div>
<div class="a" style="left:1227px;top:699.4499999999999px;width:22px;height:17.3px;background:#ffffff;border:1px solid #09090a;"></div>
<div class="a" style="left:1028px;top:726px;width:224px;height:23px;border:1px solid #3c3c42;border-radius:11.5px;"></div>
<div class="a t" style="top:731.00px;font-size:12px;line-height:14px;color:#b4b4b8;letter-spacing:0.243px;left:640.12px;width:1000px;text-align:center;"><span>Add to Custom Colors</span></div>
<div class="a" style="left:1264px;top:642px;width:60px;height:106.5px;background:#5555ff;border:1px solid #0e0e10;"></div>
<div class="a t" style="top:646.00px;font-size:12px;line-height:14px;color:#88888c;letter-spacing:0.047px;right:551.15px;"><span>Hue:</span></div>
<div class="a" style="left:1375px;top:643.4px;width:48px;height:18.2px;background:#1a1a1c;border:1px solid #0b0b0c;border-radius:3px;"></div>
<div class="a t" style="top:646.00px;font-size:12px;line-height:14px;color:#f4f4f4;letter-spacing:0.137px;left:1380.2px;"><span>240</span></div>
<svg class="a" style="left:1411.5px;top:646.1999999999999px;" width="8.4" height="12.6" viewBox="0 0 8.4 12.6"><path d="M0 4.700L4.200 0.500 8.400 4.700z" fill="#88888c"/><path d="M0 7.900L4.200 12.100 8.400 7.900z" fill="#88888c"/></svg>
<div class="a t" style="top:646.00px;font-size:12px;line-height:14px;color:#88888c;letter-spacing:-0.320px;right:452.32px;"><span>Red:</span></div>
<div class="a" style="left:1474px;top:643.4px;width:48px;height:18.2px;background:#1a1a1c;border:1px solid #0b0b0c;border-radius:3px;"></div>
<div class="a t" style="top:646.00px;font-size:12px;line-height:14px;color:#f4f4f4;letter-spacing:-0.359px;left:1479.2px;"><span>85</span></div>
<svg class="a" style="left:1510.5px;top:646.1999999999999px;" width="8.4" height="12.6" viewBox="0 0 8.4 12.6"><path d="M0 4.700L4.200 0.500 8.400 4.700z" fill="#88888c"/><path d="M0 7.900L4.200 12.100 8.400 7.900z" fill="#88888c"/></svg>
<div class="a t" style="top:673.00px;font-size:12px;line-height:14px;color:#88888c;letter-spacing:-0.417px;right:551.62px;"><span>Sat:</span></div>
<div class="a" style="left:1375px;top:670.5px;width:48px;height:18.2px;background:#1a1a1c;border:1px solid #0b0b0c;border-radius:3px;"></div>
<div class="a t" style="top:673.00px;font-size:12px;line-height:14px;color:#f4f4f4;letter-spacing:0.137px;left:1380.2px;"><span>170</span></div>
<svg class="a" style="left:1411.5px;top:673.3px;" width="8.4" height="12.6" viewBox="0 0 8.4 12.6"><path d="M0 4.700L4.200 0.500 8.400 4.700z" fill="#88888c"/><path d="M0 7.900L4.200 12.100 8.400 7.900z" fill="#88888c"/></svg>
<div class="a t" style="top:673.00px;font-size:12px;line-height:14px;color:#88888c;letter-spacing:0.122px;right:451.88px;"><span>Green:</span></div>
<div class="a" style="left:1474px;top:670.5px;width:48px;height:18.2px;background:#1a1a1c;border:1px solid #0b0b0c;border-radius:3px;"></div>
<div class="a t" style="top:673.00px;font-size:12px;line-height:14px;color:#f4f4f4;letter-spacing:-0.359px;left:1479.2px;"><span>85</span></div>
<svg class="a" style="left:1510.5px;top:673.3px;" width="8.4" height="12.6" viewBox="0 0 8.4 12.6"><path d="M0 4.700L4.200 0.500 8.400 4.700z" fill="#88888c"/><path d="M0 7.900L4.200 12.100 8.400 7.900z" fill="#88888c"/></svg>
<div class="a t" style="top:700.00px;font-size:12px;line-height:14px;color:#88888c;letter-spacing:-0.032px;right:551.23px;"><span>Val:</span></div>
<div class="a" style="left:1375px;top:697.4px;width:48px;height:18.2px;background:#1a1a1c;border:1px solid #0b0b0c;border-radius:3px;"></div>
<div class="a t" style="top:700.00px;font-size:12px;line-height:14px;color:#f4f4f4;letter-spacing:-0.016px;left:1380.2px;"><span>255</span></div>
<svg class="a" style="left:1411.5px;top:700.1999999999999px;" width="8.4" height="12.6" viewBox="0 0 8.4 12.6"><path d="M0 4.700L4.200 0.500 8.400 4.700z" fill="#4c4c50"/><path d="M0 7.900L4.200 12.100 8.400 7.900z" fill="#88888c"/></svg>
<div class="a t" style="top:700.00px;font-size:12px;line-height:14px;color:#88888c;letter-spacing:0.035px;right:451.96px;"><span>Blue:</span></div>
<div class="a" style="left:1474px;top:697.4px;width:48px;height:18.2px;background:#1a1a1c;border:1px solid #0b0b0c;border-radius:3px;"></div>
<div class="a t" style="top:700.00px;font-size:12px;line-height:14px;color:#f4f4f4;letter-spacing:-0.016px;left:1479.2px;"><span>255</span></div>
<svg class="a" style="left:1510.5px;top:700.1999999999999px;" width="8.4" height="12.6" viewBox="0 0 8.4 12.6"><path d="M0 4.700L4.200 0.500 8.400 4.700z" fill="#4c4c50"/><path d="M0 7.900L4.200 12.100 8.400 7.900z" fill="#88888c"/></svg>
<div class="a" style="left:1327px;top:719px;width:165px;height:39px;border:3px solid #b4e61d;"></div>
<div class="a t" style="top:732.00px;font-size:12px;line-height:14px;color:#88888c;letter-spacing:-0.250px;right:551.45px;"><span>HTML:</span></div>
<div class="a" style="left:1375px;top:729.2px;width:108px;height:19.2px;background:#1a1a1c;border:1px solid #0b0b0c;border-radius:3px;"></div>
<div class="a t" style="top:732.00px;font-size:12px;line-height:14px;color:#f4f4f4;letter-spacing:0.645px;left:1378.3px;"><span>#5555ff</span></div>
<div class="a" style="left:1328.2px;top:761px;width:95px;height:22.8px;border:1px solid #3c3c42;border-radius:11.4px;"></div>
<div class="a t" style="top:766.00px;font-size:12.3px;line-height:14px;color:#b4b4b8;letter-spacing:-0.376px;left:875.31px;width:1000px;text-align:center;"><span>Cancel</span></div>
<div class="a" style="left:1432.9px;top:761px;width:95.3px;height:22.8px;border:1.3px solid #d8453c;border-radius:11.4px;"></div>
<div class="a t" style="top:766.00px;font-size:12.3px;line-height:14px;color:#f4f4f4;letter-spacing:-0.781px;left:980.41px;width:1000px;text-align:center;"><span>OK</span></div>
</body></html>
